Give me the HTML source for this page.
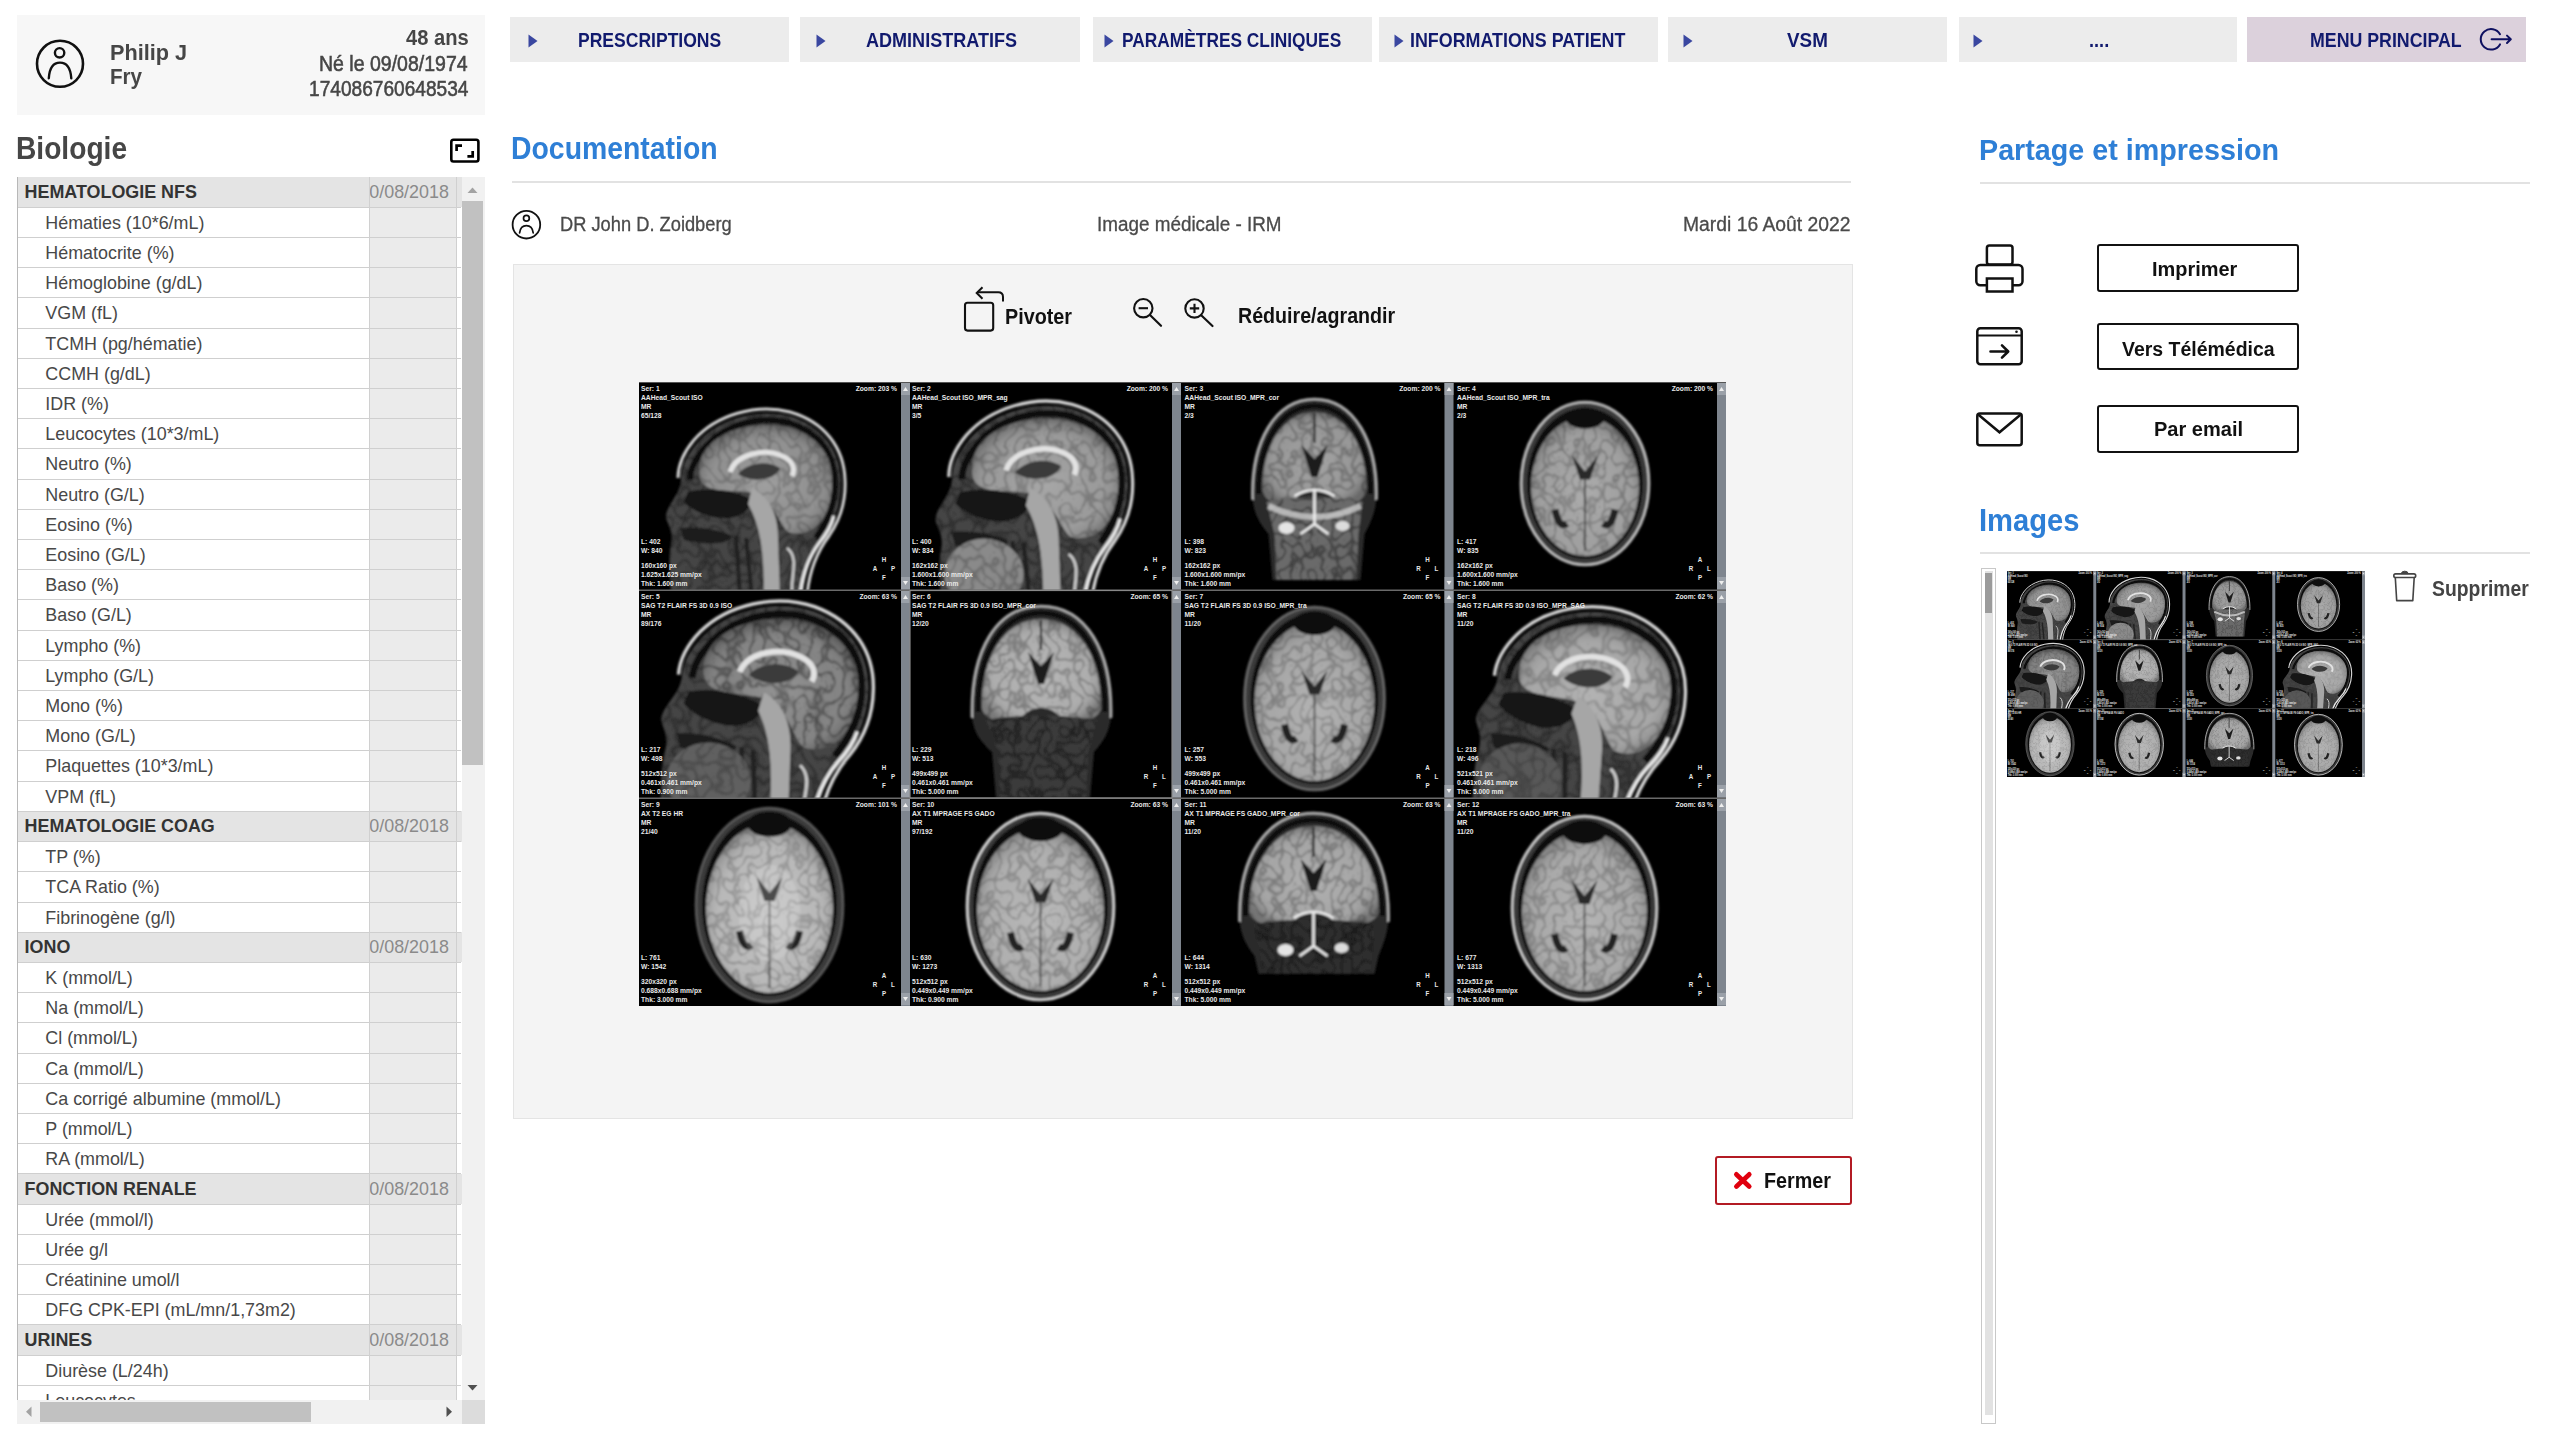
<!DOCTYPE html>
<html><head><meta charset="utf-8"><title>Documentation</title>
<style>
html,body{margin:0;padding:0;background:#fff;width:2560px;height:1439px;overflow:hidden}
body{position:relative;font-family:"Liberation Sans",sans-serif}
.b{position:absolute;box-sizing:content-box}
.t{position:absolute;white-space:nowrap;transform-origin:0 0;font-family:"Liberation Sans",sans-serif}
</style></head><body>
<svg width="0" height="0" style="position:absolute"><defs><filter id="tex11" x="0" y="0" width="100%" height="100%" filterUnits="objectBoundingBox"><feTurbulence type="turbulence" baseFrequency="0.1 0.085" numOctaves="1" seed="11" result="n"/><feColorMatrix in="n" type="matrix" values="0 0 0 0 0  0 0 0 0 0  0 0 0 0 0  -6 0 0 0 1.0" result="a"/><feComposite in="a" in2="SourceAlpha" operator="in"/></filter><filter id="tex12" x="0" y="0" width="100%" height="100%" filterUnits="objectBoundingBox"><feTurbulence type="turbulence" baseFrequency="0.1 0.085" numOctaves="1" seed="12" result="n"/><feColorMatrix in="n" type="matrix" values="0 0 0 0 0  0 0 0 0 0  0 0 0 0 0  -6 0 0 0 1.0" result="a"/><feComposite in="a" in2="SourceAlpha" operator="in"/></filter><filter id="tex21" x="0" y="0" width="100%" height="100%" filterUnits="objectBoundingBox"><feTurbulence type="turbulence" baseFrequency="0.1 0.085" numOctaves="1" seed="21" result="n"/><feColorMatrix in="n" type="matrix" values="0 0 0 0 0  0 0 0 0 0  0 0 0 0 0  -6 0 0 0 1.0" result="a"/><feComposite in="a" in2="SourceAlpha" operator="in"/></filter><filter id="tex22" x="0" y="0" width="100%" height="100%" filterUnits="objectBoundingBox"><feTurbulence type="turbulence" baseFrequency="0.1 0.085" numOctaves="1" seed="22" result="n"/><feColorMatrix in="n" type="matrix" values="0 0 0 0 0  0 0 0 0 0  0 0 0 0 0  -6 0 0 0 1.0" result="a"/><feComposite in="a" in2="SourceAlpha" operator="in"/></filter><filter id="tex23" x="0" y="0" width="100%" height="100%" filterUnits="objectBoundingBox"><feTurbulence type="turbulence" baseFrequency="0.1 0.085" numOctaves="1" seed="23" result="n"/><feColorMatrix in="n" type="matrix" values="0 0 0 0 0  0 0 0 0 0  0 0 0 0 0  -6 0 0 0 1.0" result="a"/><feComposite in="a" in2="SourceAlpha" operator="in"/></filter><filter id="tex31" x="0" y="0" width="100%" height="100%" filterUnits="objectBoundingBox"><feTurbulence type="turbulence" baseFrequency="0.1 0.085" numOctaves="1" seed="31" result="n"/><feColorMatrix in="n" type="matrix" values="0 0 0 0 0  0 0 0 0 0  0 0 0 0 0  -6 0 0 0 1.0" result="a"/><feComposite in="a" in2="SourceAlpha" operator="in"/></filter><filter id="tex34" x="0" y="0" width="100%" height="100%" filterUnits="objectBoundingBox"><feTurbulence type="turbulence" baseFrequency="0.1 0.085" numOctaves="1" seed="34" result="n"/><feColorMatrix in="n" type="matrix" values="0 0 0 0 0  0 0 0 0 0  0 0 0 0 0  -6 0 0 0 1.0" result="a"/><feComposite in="a" in2="SourceAlpha" operator="in"/></filter><filter id="tex41" x="0" y="0" width="100%" height="100%" filterUnits="objectBoundingBox"><feTurbulence type="turbulence" baseFrequency="0.1 0.085" numOctaves="1" seed="41" result="n"/><feColorMatrix in="n" type="matrix" values="0 0 0 0 0  0 0 0 0 0  0 0 0 0 0  -6 0 0 0 1.0" result="a"/><feComposite in="a" in2="SourceAlpha" operator="in"/></filter><filter id="tex51" x="0" y="0" width="100%" height="100%" filterUnits="objectBoundingBox"><feTurbulence type="turbulence" baseFrequency="0.1 0.085" numOctaves="1" seed="51" result="n"/><feColorMatrix in="n" type="matrix" values="0 0 0 0 0  0 0 0 0 0  0 0 0 0 0  -6 0 0 0 1.0" result="a"/><feComposite in="a" in2="SourceAlpha" operator="in"/></filter><filter id="tex52" x="0" y="0" width="100%" height="100%" filterUnits="objectBoundingBox"><feTurbulence type="turbulence" baseFrequency="0.1 0.085" numOctaves="1" seed="52" result="n"/><feColorMatrix in="n" type="matrix" values="0 0 0 0 0  0 0 0 0 0  0 0 0 0 0  -6 0 0 0 1.0" result="a"/><feComposite in="a" in2="SourceAlpha" operator="in"/></filter><filter id="tex53" x="0" y="0" width="100%" height="100%" filterUnits="objectBoundingBox"><feTurbulence type="turbulence" baseFrequency="0.1 0.085" numOctaves="1" seed="53" result="n"/><feColorMatrix in="n" type="matrix" values="0 0 0 0 0  0 0 0 0 0  0 0 0 0 0  -6 0 0 0 1.0" result="a"/><feComposite in="a" in2="SourceAlpha" operator="in"/></filter><filter id="tex61" x="0" y="0" width="100%" height="100%" filterUnits="objectBoundingBox"><feTurbulence type="turbulence" baseFrequency="0.1 0.085" numOctaves="1" seed="61" result="n"/><feColorMatrix in="n" type="matrix" values="0 0 0 0 0  0 0 0 0 0  0 0 0 0 0  -6 0 0 0 1.0" result="a"/><feComposite in="a" in2="SourceAlpha" operator="in"/></filter><filter id="tex64" x="0" y="0" width="100%" height="100%" filterUnits="objectBoundingBox"><feTurbulence type="turbulence" baseFrequency="0.1 0.085" numOctaves="1" seed="64" result="n"/><feColorMatrix in="n" type="matrix" values="0 0 0 0 0  0 0 0 0 0  0 0 0 0 0  -6 0 0 0 1.0" result="a"/><feComposite in="a" in2="SourceAlpha" operator="in"/></filter><filter id="tex71" x="0" y="0" width="100%" height="100%" filterUnits="objectBoundingBox"><feTurbulence type="turbulence" baseFrequency="0.1 0.085" numOctaves="1" seed="71" result="n"/><feColorMatrix in="n" type="matrix" values="0 0 0 0 0  0 0 0 0 0  0 0 0 0 0  -6 0 0 0 1.0" result="a"/><feComposite in="a" in2="SourceAlpha" operator="in"/></filter><filter id="tex81" x="0" y="0" width="100%" height="100%" filterUnits="objectBoundingBox"><feTurbulence type="turbulence" baseFrequency="0.1 0.085" numOctaves="1" seed="81" result="n"/><feColorMatrix in="n" type="matrix" values="0 0 0 0 0  0 0 0 0 0  0 0 0 0 0  -6 0 0 0 1.0" result="a"/><feComposite in="a" in2="SourceAlpha" operator="in"/></filter><filter id="tex82" x="0" y="0" width="100%" height="100%" filterUnits="objectBoundingBox"><feTurbulence type="turbulence" baseFrequency="0.1 0.085" numOctaves="1" seed="82" result="n"/><feColorMatrix in="n" type="matrix" values="0 0 0 0 0  0 0 0 0 0  0 0 0 0 0  -6 0 0 0 1.0" result="a"/><feComposite in="a" in2="SourceAlpha" operator="in"/></filter><filter id="tex83" x="0" y="0" width="100%" height="100%" filterUnits="objectBoundingBox"><feTurbulence type="turbulence" baseFrequency="0.1 0.085" numOctaves="1" seed="83" result="n"/><feColorMatrix in="n" type="matrix" values="0 0 0 0 0  0 0 0 0 0  0 0 0 0 0  -6 0 0 0 1.0" result="a"/><feComposite in="a" in2="SourceAlpha" operator="in"/></filter><filter id="tex91" x="0" y="0" width="100%" height="100%" filterUnits="objectBoundingBox"><feTurbulence type="turbulence" baseFrequency="0.1 0.085" numOctaves="1" seed="91" result="n"/><feColorMatrix in="n" type="matrix" values="0 0 0 0 0  0 0 0 0 0  0 0 0 0 0  -6 0 0 0 1.0" result="a"/><feComposite in="a" in2="SourceAlpha" operator="in"/></filter><filter id="tex101" x="0" y="0" width="100%" height="100%" filterUnits="objectBoundingBox"><feTurbulence type="turbulence" baseFrequency="0.1 0.085" numOctaves="1" seed="101" result="n"/><feColorMatrix in="n" type="matrix" values="0 0 0 0 0  0 0 0 0 0  0 0 0 0 0  -6 0 0 0 1.0" result="a"/><feComposite in="a" in2="SourceAlpha" operator="in"/></filter><filter id="tex111" x="0" y="0" width="100%" height="100%" filterUnits="objectBoundingBox"><feTurbulence type="turbulence" baseFrequency="0.1 0.085" numOctaves="1" seed="111" result="n"/><feColorMatrix in="n" type="matrix" values="0 0 0 0 0  0 0 0 0 0  0 0 0 0 0  -6 0 0 0 1.0" result="a"/><feComposite in="a" in2="SourceAlpha" operator="in"/></filter><filter id="tex114" x="0" y="0" width="100%" height="100%" filterUnits="objectBoundingBox"><feTurbulence type="turbulence" baseFrequency="0.1 0.085" numOctaves="1" seed="114" result="n"/><feColorMatrix in="n" type="matrix" values="0 0 0 0 0  0 0 0 0 0  0 0 0 0 0  -6 0 0 0 1.0" result="a"/><feComposite in="a" in2="SourceAlpha" operator="in"/></filter><filter id="tex121" x="0" y="0" width="100%" height="100%" filterUnits="objectBoundingBox"><feTurbulence type="turbulence" baseFrequency="0.1 0.085" numOctaves="1" seed="121" result="n"/><feColorMatrix in="n" type="matrix" values="0 0 0 0 0  0 0 0 0 0  0 0 0 0 0  -6 0 0 0 1.0" result="a"/><feComposite in="a" in2="SourceAlpha" operator="in"/></filter><radialGradient id="glow" cx="0.5" cy="0.55" r="0.55"><stop offset="0" stop-color="#fff" stop-opacity="0.16"/><stop offset="0.65" stop-color="#fff" stop-opacity="0.04"/><stop offset="1" stop-color="#000" stop-opacity="0.28"/></radialGradient><filter id="soft" x="-5%" y="-5%" width="110%" height="110%"><feGaussianBlur stdDeviation="0.9"/></filter><filter id="softt" x="-5%" y="-5%" width="110%" height="110%"><feGaussianBlur stdDeviation="1.6"/></filter><symbol id="mri" viewBox="0 0 1087 624"><rect width="1087" height="624" fill="#000"/><g transform="translate(0,0)"><clipPath id="c00"><rect width="262" height="208"/></clipPath><g clip-path="url(#c00)"><g filter="url(#soft)"><g transform="translate(1,6)"><path d="M163 208 C165 185 172 165 185 148 C196 132 202 112 201 92 C200 62 182 38 150 28 C118 20 80 30 58 54 C46 68 41 80 41 90 C41 98 38 104 33 112 C28 120 24 127 27 133 C30 140 33 146 31 156 C28 170 30 190 31 208 Z" fill="#444444"/><path d="M163 208 C165 185 172 165 185 148 C196 132 202 112 201 92 C200 62 182 38 150 28 C118 20 80 30 58 54 C46 68 41 80 41 90 C41 98 38 104 33 112 C28 120 24 127 27 133 C30 140 33 146 31 156 C28 170 30 190 31 208 Z" fill="#000" filter="url(#tex11)" opacity="0.324"/><path d="M167 208 C169 185 176 165 189 148 C200 132 206 112 205 92 C204 60 185 34 150 24 C116 15 76 27 54 52 C43 65 38 78 38 90" fill="none" stroke="#d4d4d4" stroke-width="3"/><path d="M160 208 C162 188 168 170 180 154 C188 144 192 136 194 128" fill="none" stroke="#e6e6e6" stroke-width="3.5"/><path d="M176 150 C189 132 196 112 195 92 C194 64 178 44 150 35 C120 27 86 36 66 58 C56 70 50 80 50 92" fill="none" stroke="#0c0c0c" stroke-width="6"/><path d="M59 84 C58 60 80 42 112 38 C146 34 176 44 188 70 C196 90 192 118 182 132 C174 144 160 148 148 144 C140 136 136 122 124 110 C112 102 96 104 78 102 C64 100 59 94 59 84 Z" fill="#8c8c8c"/><path d="M59 84 C58 60 80 42 112 38 C146 34 176 44 188 70 C196 90 192 118 182 132 C174 144 160 148 148 144 C140 136 136 122 124 110 C112 102 96 104 78 102 C64 100 59 94 59 84 Z" fill="#000" filter="url(#tex12)" opacity="0.230"/><path d="M59 84 C58 60 80 42 112 38 C146 34 176 44 188 70 C196 90 192 118 182 132 C174 144 160 148 148 144 C140 136 136 122 124 110 C112 102 96 104 78 102 C64 100 59 94 59 84 Z" fill="url(#glow)"/><path d="M90 84 C96 66 124 60 142 68 C152 72 156 80 152 88" fill="none" stroke="#e2e2e2" stroke-width="5"/><path d="M98 86 C108 74 128 72 140 80 C136 92 112 96 98 86Z" fill="#3a3a3a"/><path d="M48 104 C70 98 100 104 112 112 C110 124 96 132 80 130 C64 128 52 122 44 114Z" fill="#121212"/><path d="M40 140 C60 138 80 142 92 148 C88 156 70 158 44 152Z" fill="#1a1a1a"/><path d="M112 100 C128 108 138 124 138 150 L140 208 L124 208 C124 170 122 140 108 116Z" fill="#a6a6a6"/><path d="M106 150 L112 208 M96 148 L100 208" stroke="#222" stroke-width="4"/><path d="M147 160 C160 170 150 190 152 208" stroke="#cfcfcf" stroke-width="2.5" fill="none"/></g></g><text x="2.3255813953488373" y="9.5" font-size="7.8" fill="#e8e8e8" text-anchor="start" font-family="Liberation Sans" font-weight="bold" transform="scale(0.86,1)" >Ser: 1</text><text x="2.3255813953488373" y="18.3" font-size="7.8" fill="#e8e8e8" text-anchor="start" font-family="Liberation Sans" font-weight="bold" transform="scale(0.86,1)" >AAHead_Scout ISO</text><text x="2.3255813953488373" y="27.1" font-size="7.8" fill="#e8e8e8" text-anchor="start" font-family="Liberation Sans" font-weight="bold" transform="scale(0.86,1)" >MR</text><text x="2.3255813953488373" y="35.900000000000006" font-size="7.8" fill="#e8e8e8" text-anchor="start" font-family="Liberation Sans" font-weight="bold" transform="scale(0.86,1)" >65/128</text><text x="300.0" y="9.5" font-size="7.8" fill="#e8e8e8" text-anchor="end" font-family="Liberation Sans" font-weight="bold" transform="scale(0.86,1)" >Zoom: 203 %</text><text x="2.3255813953488373" y="162" font-size="7.8" fill="#e8e8e8" text-anchor="start" font-family="Liberation Sans" font-weight="bold" transform="scale(0.86,1)" >L: 402</text><text x="2.3255813953488373" y="171" font-size="7.8" fill="#e8e8e8" text-anchor="start" font-family="Liberation Sans" font-weight="bold" transform="scale(0.86,1)" >W: 840</text><text x="2.3255813953488373" y="186.5" font-size="7.8" fill="#e8e8e8" text-anchor="start" font-family="Liberation Sans" font-weight="bold" transform="scale(0.86,1)" >160x160 px</text><text x="2.3255813953488373" y="195.4" font-size="7.8" fill="#e8e8e8" text-anchor="start" font-family="Liberation Sans" font-weight="bold" transform="scale(0.86,1)" >1.625x1.625 mm/px</text><text x="2.3255813953488373" y="204.3" font-size="7.8" fill="#e8e8e8" text-anchor="start" font-family="Liberation Sans" font-weight="bold" transform="scale(0.86,1)" >Thk: 1.600 mm</text><text x="284.8837209302326" y="180" font-size="7.2" fill="#e8e8e8" text-anchor="middle" font-family="Liberation Sans" font-weight="bold" transform="scale(0.86,1)" >H</text><text x="274.4186046511628" y="189" font-size="7.2" fill="#e8e8e8" text-anchor="middle" font-family="Liberation Sans" font-weight="bold" transform="scale(0.86,1)" >A</text><text x="295.34883720930236" y="189" font-size="7.2" fill="#e8e8e8" text-anchor="middle" font-family="Liberation Sans" font-weight="bold" transform="scale(0.86,1)" >P</text><text x="284.8837209302326" y="198" font-size="7.2" fill="#e8e8e8" text-anchor="middle" font-family="Liberation Sans" font-weight="bold" transform="scale(0.86,1)" >F</text></g><rect x="262" y="0" width="9" height="208" fill="#7e858e"/><rect x="262" y="1" width="9" height="12" fill="#9aa0a8"/><rect x="262" y="195" width="9" height="12" fill="#9aa0a8"/><path d="M264 9 L266.5 5 L269 9Z" fill="#eee"/><path d="M264 199 L266.5 203 L269 199Z" fill="#eee"/></g><g transform="translate(271,0)"><clipPath id="c10"><rect width="262" height="208"/></clipPath><g clip-path="url(#c10)"><g filter="url(#soft)"><g transform="translate(-3,-4) scale(1.1)"><path d="M163 208 C165 185 172 165 185 148 C196 132 202 112 201 92 C200 62 182 38 150 28 C118 20 80 30 58 54 C46 68 41 80 41 90 C41 98 38 104 33 112 C28 120 24 127 27 133 C30 140 33 146 31 156 C28 170 30 190 31 208 Z" fill="#444444"/><path d="M163 208 C165 185 172 165 185 148 C196 132 202 112 201 92 C200 62 182 38 150 28 C118 20 80 30 58 54 C46 68 41 80 41 90 C41 98 38 104 33 112 C28 120 24 127 27 133 C30 140 33 146 31 156 C28 170 30 190 31 208 Z" fill="#000" filter="url(#tex21)" opacity="0.324"/><path d="M167 208 C169 185 176 165 189 148 C200 132 206 112 205 92 C204 60 185 34 150 24 C116 15 76 27 54 52 C43 65 38 78 38 90" fill="none" stroke="#d4d4d4" stroke-width="3"/><path d="M160 208 C162 188 168 170 180 154 C188 144 192 136 194 128" fill="none" stroke="#e6e6e6" stroke-width="3.5"/><path d="M176 150 C189 132 196 112 195 92 C194 64 178 44 150 35 C120 27 86 36 66 58 C56 70 50 80 50 92" fill="none" stroke="#0c0c0c" stroke-width="6"/><path d="M59 84 C58 60 80 42 112 38 C146 34 176 44 188 70 C196 90 192 118 182 132 C174 144 160 148 148 144 C140 136 136 122 124 110 C112 102 96 104 78 102 C64 100 59 94 59 84 Z" fill="#969696"/><path d="M59 84 C58 60 80 42 112 38 C146 34 176 44 188 70 C196 90 192 118 182 132 C174 144 160 148 148 144 C140 136 136 122 124 110 C112 102 96 104 78 102 C64 100 59 94 59 84 Z" fill="#000" filter="url(#tex22)" opacity="0.230"/><path d="M59 84 C58 60 80 42 112 38 C146 34 176 44 188 70 C196 90 192 118 182 132 C174 144 160 148 148 144 C140 136 136 122 124 110 C112 102 96 104 78 102 C64 100 59 94 59 84 Z" fill="url(#glow)"/><path d="M90 84 C96 66 124 60 142 68 C152 72 156 80 152 88" fill="none" stroke="#e2e2e2" stroke-width="5"/><path d="M98 86 C108 74 128 72 140 80 C136 92 112 96 98 86Z" fill="#3a3a3a"/><path d="M48 104 C70 98 100 104 112 112 C110 124 96 132 80 130 C64 128 52 122 44 114Z" fill="#121212"/><path d="M40 140 C60 138 80 142 92 148 C88 156 70 158 44 152Z" fill="#1a1a1a"/><path d="M112 100 C128 108 138 124 138 150 L140 208 L124 208 C124 170 122 140 108 116Z" fill="#a6a6a6"/><path d="M106 150 L112 208 M96 148 L100 208" stroke="#222" stroke-width="4"/><path d="M147 160 C160 170 150 190 152 208" stroke="#cfcfcf" stroke-width="2.5" fill="none"/><ellipse cx="70" cy="178" rx="36" ry="32" fill="#8a8a8a"/><path d="M34 178 a36 32 0 1 0 72 0 a36 32 0 1 0 -72 0" fill="#000" filter="url(#tex23)" opacity="0.216"/></g></g><text x="2.3255813953488373" y="9.5" font-size="7.8" fill="#e8e8e8" text-anchor="start" font-family="Liberation Sans" font-weight="bold" transform="scale(0.86,1)" >Ser: 2</text><text x="2.3255813953488373" y="18.3" font-size="7.8" fill="#e8e8e8" text-anchor="start" font-family="Liberation Sans" font-weight="bold" transform="scale(0.86,1)" >AAHead_Scout ISO_MPR_sag</text><text x="2.3255813953488373" y="27.1" font-size="7.8" fill="#e8e8e8" text-anchor="start" font-family="Liberation Sans" font-weight="bold" transform="scale(0.86,1)" >MR</text><text x="2.3255813953488373" y="35.900000000000006" font-size="7.8" fill="#e8e8e8" text-anchor="start" font-family="Liberation Sans" font-weight="bold" transform="scale(0.86,1)" >3/5</text><text x="300.0" y="9.5" font-size="7.8" fill="#e8e8e8" text-anchor="end" font-family="Liberation Sans" font-weight="bold" transform="scale(0.86,1)" >Zoom: 200 %</text><text x="2.3255813953488373" y="162" font-size="7.8" fill="#e8e8e8" text-anchor="start" font-family="Liberation Sans" font-weight="bold" transform="scale(0.86,1)" >L: 400</text><text x="2.3255813953488373" y="171" font-size="7.8" fill="#e8e8e8" text-anchor="start" font-family="Liberation Sans" font-weight="bold" transform="scale(0.86,1)" >W: 834</text><text x="2.3255813953488373" y="186.5" font-size="7.8" fill="#e8e8e8" text-anchor="start" font-family="Liberation Sans" font-weight="bold" transform="scale(0.86,1)" >162x162 px</text><text x="2.3255813953488373" y="195.4" font-size="7.8" fill="#e8e8e8" text-anchor="start" font-family="Liberation Sans" font-weight="bold" transform="scale(0.86,1)" >1.600x1.600 mm/px</text><text x="2.3255813953488373" y="204.3" font-size="7.8" fill="#e8e8e8" text-anchor="start" font-family="Liberation Sans" font-weight="bold" transform="scale(0.86,1)" >Thk: 1.600 mm</text><text x="284.8837209302326" y="180" font-size="7.2" fill="#e8e8e8" text-anchor="middle" font-family="Liberation Sans" font-weight="bold" transform="scale(0.86,1)" >H</text><text x="274.4186046511628" y="189" font-size="7.2" fill="#e8e8e8" text-anchor="middle" font-family="Liberation Sans" font-weight="bold" transform="scale(0.86,1)" >A</text><text x="295.34883720930236" y="189" font-size="7.2" fill="#e8e8e8" text-anchor="middle" font-family="Liberation Sans" font-weight="bold" transform="scale(0.86,1)" >P</text><text x="284.8837209302326" y="198" font-size="7.2" fill="#e8e8e8" text-anchor="middle" font-family="Liberation Sans" font-weight="bold" transform="scale(0.86,1)" >F</text></g><rect x="262" y="0" width="9" height="208" fill="#7e858e"/><rect x="262" y="1" width="9" height="12" fill="#9aa0a8"/><rect x="262" y="195" width="9" height="12" fill="#9aa0a8"/><path d="M264 9 L266.5 5 L269 9Z" fill="#eee"/><path d="M264 199 L266.5 203 L269 199Z" fill="#eee"/></g><g transform="translate(543.5,0)"><clipPath id="c20"><rect width="262" height="208"/></clipPath><g clip-path="url(#c20)"><g filter="url(#soft)"><path d="M70 112 C68 60 92.32 17 132 17 C171.68 17 196 60 194 112 C194 126 190 138 182 152 L178 198 L90 198 L86 152 C74 138 70 126 70 112Z" fill="#2c2c2c"/><path d="M70 118 C68 60 92.32 17 132 17 C171.68 17 196 60 194 118" fill="none" stroke="#b4b4b4" stroke-width="2.6"/><path d="M76 112 C75 64 97.28 24 132 24 C166.72 24 189 64 188 112" fill="none" stroke="#0c0c0c" stroke-width="5"/><path d="M80 108 C79 66 99.75999999999999 30 132 30 C164.24 30 185 66 184 108 C182 122 162 126 148 114 C140 106 124 106 116 114 C102 126 82 122 80 108Z" fill="#939393"/><path d="M80 108 C79 66 99.75999999999999 30 132 30 C164.24 30 185 66 184 108 C182 122 162 126 148 114 C140 106 124 106 116 114 C102 126 82 122 80 108Z" fill="#000" filter="url(#tex31)" opacity="0.288"/><path d="M80 108 C79 66 99.75999999999999 30 132 30 C164.24 30 185 66 184 108 C182 122 162 126 148 114 C140 106 124 106 116 114 C102 126 82 122 80 108Z" fill="url(#glow)"/><path d="M119 63 L132 77 L145 63 L135 95 L129 95Z" fill="#1e1e1e"/><path d="M132 31 L132 61" stroke="#222" stroke-width="2"/><path d="M84 120 C112 114 152 114 180 120 L176 152 L174 198 L94 198 L92 152Z" fill="#6a6a6a"/><path d="M84 120 C112 114 152 114 180 120 L176 152 L174 198 L94 198 L92 152Z" fill="#000" filter="url(#tex34)" opacity="0.396"/><path d="M86 124 Q132 146 178 124" fill="none" stroke="#cfcfcf" stroke-width="6" opacity="0.8"/><path d="M112 114 Q132 102 152 114 M132 108 L132 142 M132 142 L118 152 M132 142 L146 152" stroke="#eee" stroke-width="2.6" fill="none"/><ellipse cx="104" cy="146" rx="8" ry="6" fill="#e4e4e4"/><ellipse cx="160" cy="144" rx="7" ry="5" fill="#dcdcdc"/></g><text x="2.3255813953488373" y="9.5" font-size="7.8" fill="#e8e8e8" text-anchor="start" font-family="Liberation Sans" font-weight="bold" transform="scale(0.86,1)" >Ser: 3</text><text x="2.3255813953488373" y="18.3" font-size="7.8" fill="#e8e8e8" text-anchor="start" font-family="Liberation Sans" font-weight="bold" transform="scale(0.86,1)" >AAHead_Scout ISO_MPR_cor</text><text x="2.3255813953488373" y="27.1" font-size="7.8" fill="#e8e8e8" text-anchor="start" font-family="Liberation Sans" font-weight="bold" transform="scale(0.86,1)" >MR</text><text x="2.3255813953488373" y="35.900000000000006" font-size="7.8" fill="#e8e8e8" text-anchor="start" font-family="Liberation Sans" font-weight="bold" transform="scale(0.86,1)" >2/3</text><text x="300.0" y="9.5" font-size="7.8" fill="#e8e8e8" text-anchor="end" font-family="Liberation Sans" font-weight="bold" transform="scale(0.86,1)" >Zoom: 200 %</text><text x="2.3255813953488373" y="162" font-size="7.8" fill="#e8e8e8" text-anchor="start" font-family="Liberation Sans" font-weight="bold" transform="scale(0.86,1)" >L: 398</text><text x="2.3255813953488373" y="171" font-size="7.8" fill="#e8e8e8" text-anchor="start" font-family="Liberation Sans" font-weight="bold" transform="scale(0.86,1)" >W: 823</text><text x="2.3255813953488373" y="186.5" font-size="7.8" fill="#e8e8e8" text-anchor="start" font-family="Liberation Sans" font-weight="bold" transform="scale(0.86,1)" >162x162 px</text><text x="2.3255813953488373" y="195.4" font-size="7.8" fill="#e8e8e8" text-anchor="start" font-family="Liberation Sans" font-weight="bold" transform="scale(0.86,1)" >1.600x1.600 mm/px</text><text x="2.3255813953488373" y="204.3" font-size="7.8" fill="#e8e8e8" text-anchor="start" font-family="Liberation Sans" font-weight="bold" transform="scale(0.86,1)" >Thk: 1.600 mm</text><text x="284.8837209302326" y="180" font-size="7.2" fill="#e8e8e8" text-anchor="middle" font-family="Liberation Sans" font-weight="bold" transform="scale(0.86,1)" >H</text><text x="274.4186046511628" y="189" font-size="7.2" fill="#e8e8e8" text-anchor="middle" font-family="Liberation Sans" font-weight="bold" transform="scale(0.86,1)" >R</text><text x="295.34883720930236" y="189" font-size="7.2" fill="#e8e8e8" text-anchor="middle" font-family="Liberation Sans" font-weight="bold" transform="scale(0.86,1)" >L</text><text x="284.8837209302326" y="198" font-size="7.2" fill="#e8e8e8" text-anchor="middle" font-family="Liberation Sans" font-weight="bold" transform="scale(0.86,1)" >F</text></g><rect x="262" y="0" width="9" height="208" fill="#7e858e"/><rect x="262" y="1" width="9" height="12" fill="#9aa0a8"/><rect x="262" y="195" width="9" height="12" fill="#9aa0a8"/><path d="M264 9 L266.5 5 L269 9Z" fill="#eee"/><path d="M264 199 L266.5 203 L269 199Z" fill="#eee"/></g><g transform="translate(816,0)"><clipPath id="c30"><rect width="262" height="208"/></clipPath><g clip-path="url(#c30)"><g filter="url(#soft)"><ellipse cx="130" cy="101.5" rx="64" ry="81.5" fill="#3a3a3a" stroke="#c0c0c0" stroke-width="2.6"/><ellipse cx="130" cy="101.5" rx="58" ry="75.5" fill="#111"/><path d="M76 104.5 a54 69.5 0 1 0 108 0 a54 69.5 0 1 0 -108 0" fill="#9c9c9c"/><path d="M76 104.5 a54 69.5 0 1 0 108 0 a54 69.5 0 1 0 -108 0" fill="#000" filter="url(#tex41)" opacity="0.252"/><path d="M76 104.5 a54 69.5 0 1 0 108 0 a54 69.5 0 1 0 -108 0" fill="url(#glow)"/><ellipse cx="130" cy="36.0" rx="19.2" ry="10.595" fill="#0e0e0e"/><path d="M117 73.5 L130 89.5 L143 73.5 L135 97.5 L125 97.5Z" fill="#2a2a2a"/><path d="M100 127.5 Q104 147.5 112 141.5 M160 127.5 Q156 147.5 148 141.5" stroke="#242424" stroke-width="7" fill="none"/><path d="M130 97.5 L130 169.0" stroke="#000" stroke-opacity="0.45" stroke-width="2"/></g><text x="2.3255813953488373" y="9.5" font-size="7.8" fill="#e8e8e8" text-anchor="start" font-family="Liberation Sans" font-weight="bold" transform="scale(0.86,1)" >Ser: 4</text><text x="2.3255813953488373" y="18.3" font-size="7.8" fill="#e8e8e8" text-anchor="start" font-family="Liberation Sans" font-weight="bold" transform="scale(0.86,1)" >AAHead_Scout ISO_MPR_tra</text><text x="2.3255813953488373" y="27.1" font-size="7.8" fill="#e8e8e8" text-anchor="start" font-family="Liberation Sans" font-weight="bold" transform="scale(0.86,1)" >MR</text><text x="2.3255813953488373" y="35.900000000000006" font-size="7.8" fill="#e8e8e8" text-anchor="start" font-family="Liberation Sans" font-weight="bold" transform="scale(0.86,1)" >2/3</text><text x="300.0" y="9.5" font-size="7.8" fill="#e8e8e8" text-anchor="end" font-family="Liberation Sans" font-weight="bold" transform="scale(0.86,1)" >Zoom: 200 %</text><text x="2.3255813953488373" y="162" font-size="7.8" fill="#e8e8e8" text-anchor="start" font-family="Liberation Sans" font-weight="bold" transform="scale(0.86,1)" >L: 417</text><text x="2.3255813953488373" y="171" font-size="7.8" fill="#e8e8e8" text-anchor="start" font-family="Liberation Sans" font-weight="bold" transform="scale(0.86,1)" >W: 835</text><text x="2.3255813953488373" y="186.5" font-size="7.8" fill="#e8e8e8" text-anchor="start" font-family="Liberation Sans" font-weight="bold" transform="scale(0.86,1)" >162x162 px</text><text x="2.3255813953488373" y="195.4" font-size="7.8" fill="#e8e8e8" text-anchor="start" font-family="Liberation Sans" font-weight="bold" transform="scale(0.86,1)" >1.600x1.600 mm/px</text><text x="2.3255813953488373" y="204.3" font-size="7.8" fill="#e8e8e8" text-anchor="start" font-family="Liberation Sans" font-weight="bold" transform="scale(0.86,1)" >Thk: 1.600 mm</text><text x="284.8837209302326" y="180" font-size="7.2" fill="#e8e8e8" text-anchor="middle" font-family="Liberation Sans" font-weight="bold" transform="scale(0.86,1)" >A</text><text x="274.4186046511628" y="189" font-size="7.2" fill="#e8e8e8" text-anchor="middle" font-family="Liberation Sans" font-weight="bold" transform="scale(0.86,1)" >R</text><text x="295.34883720930236" y="189" font-size="7.2" fill="#e8e8e8" text-anchor="middle" font-family="Liberation Sans" font-weight="bold" transform="scale(0.86,1)" >L</text><text x="284.8837209302326" y="198" font-size="7.2" fill="#e8e8e8" text-anchor="middle" font-family="Liberation Sans" font-weight="bold" transform="scale(0.86,1)" >P</text></g><rect x="262" y="0" width="9" height="208" fill="#7e858e"/><rect x="262" y="1" width="9" height="12" fill="#9aa0a8"/><rect x="262" y="195" width="9" height="12" fill="#9aa0a8"/><path d="M264 9 L266.5 5 L269 9Z" fill="#eee"/><path d="M264 199 L266.5 203 L269 199Z" fill="#eee"/></g><g transform="translate(0,208)"><clipPath id="c01"><rect width="262" height="208"/></clipPath><g clip-path="url(#c01)"><g filter="url(#soft)"><g transform="translate(-6,-14) scale(1.17) rotate(4 120 100)"><path d="M163 208 C165 185 172 165 185 148 C196 132 202 112 201 92 C200 62 182 38 150 28 C118 20 80 30 58 54 C46 68 41 80 41 90 C41 98 38 104 33 112 C28 120 24 127 27 133 C30 140 33 146 31 156 C28 170 30 190 31 208 Z" fill="#444444"/><path d="M163 208 C165 185 172 165 185 148 C196 132 202 112 201 92 C200 62 182 38 150 28 C118 20 80 30 58 54 C46 68 41 80 41 90 C41 98 38 104 33 112 C28 120 24 127 27 133 C30 140 33 146 31 156 C28 170 30 190 31 208 Z" fill="#000" filter="url(#tex51)" opacity="0.324"/><path d="M167 208 C169 185 176 165 189 148 C200 132 206 112 205 92 C204 60 185 34 150 24 C116 15 76 27 54 52 C43 65 38 78 38 90" fill="none" stroke="#d4d4d4" stroke-width="3"/><path d="M160 208 C162 188 168 170 180 154 C188 144 192 136 194 128" fill="none" stroke="#e6e6e6" stroke-width="3.5"/><path d="M176 150 C189 132 196 112 195 92 C194 64 178 44 150 35 C120 27 86 36 66 58 C56 70 50 80 50 92" fill="none" stroke="#0c0c0c" stroke-width="6"/><path d="M59 84 C58 60 80 42 112 38 C146 34 176 44 188 70 C196 90 192 118 182 132 C174 144 160 148 148 144 C140 136 136 122 124 110 C112 102 96 104 78 102 C64 100 59 94 59 84 Z" fill="#7e7e7e"/><path d="M59 84 C58 60 80 42 112 38 C146 34 176 44 188 70 C196 90 192 118 182 132 C174 144 160 148 148 144 C140 136 136 122 124 110 C112 102 96 104 78 102 C64 100 59 94 59 84 Z" fill="#000" filter="url(#tex52)" opacity="0.432"/><path d="M59 84 C58 60 80 42 112 38 C146 34 176 44 188 70 C196 90 192 118 182 132 C174 144 160 148 148 144 C140 136 136 122 124 110 C112 102 96 104 78 102 C64 100 59 94 59 84 Z" fill="url(#glow)"/><path d="M90 84 C96 66 124 60 142 68 C152 72 156 80 152 88" fill="none" stroke="#e2e2e2" stroke-width="5"/><path d="M98 86 C108 74 128 72 140 80 C136 92 112 96 98 86Z" fill="#3a3a3a"/><path d="M48 104 C70 98 100 104 112 112 C110 124 96 132 80 130 C64 128 52 122 44 114Z" fill="#121212"/><path d="M40 140 C60 138 80 142 92 148 C88 156 70 158 44 152Z" fill="#1a1a1a"/><path d="M112 100 C128 108 138 124 138 150 L140 208 L124 208 C124 170 122 140 108 116Z" fill="#a6a6a6"/><path d="M106 150 L112 208 M96 148 L100 208" stroke="#222" stroke-width="4"/><path d="M147 160 C160 170 150 190 152 208" stroke="#cfcfcf" stroke-width="2.5" fill="none"/><ellipse cx="70" cy="178" rx="36" ry="32" fill="#606060"/><path d="M34 178 a36 32 0 1 0 72 0 a36 32 0 1 0 -72 0" fill="#000" filter="url(#tex53)" opacity="0.216"/></g></g><text x="2.3255813953488373" y="9.5" font-size="7.8" fill="#e8e8e8" text-anchor="start" font-family="Liberation Sans" font-weight="bold" transform="scale(0.86,1)" >Ser: 5</text><text x="2.3255813953488373" y="18.3" font-size="7.8" fill="#e8e8e8" text-anchor="start" font-family="Liberation Sans" font-weight="bold" transform="scale(0.86,1)" >SAG T2 FLAIR FS 3D 0.9 ISO</text><text x="2.3255813953488373" y="27.1" font-size="7.8" fill="#e8e8e8" text-anchor="start" font-family="Liberation Sans" font-weight="bold" transform="scale(0.86,1)" >MR</text><text x="2.3255813953488373" y="35.900000000000006" font-size="7.8" fill="#e8e8e8" text-anchor="start" font-family="Liberation Sans" font-weight="bold" transform="scale(0.86,1)" >89/176</text><text x="300.0" y="9.5" font-size="7.8" fill="#e8e8e8" text-anchor="end" font-family="Liberation Sans" font-weight="bold" transform="scale(0.86,1)" >Zoom: 63 %</text><text x="2.3255813953488373" y="162" font-size="7.8" fill="#e8e8e8" text-anchor="start" font-family="Liberation Sans" font-weight="bold" transform="scale(0.86,1)" >L: 217</text><text x="2.3255813953488373" y="171" font-size="7.8" fill="#e8e8e8" text-anchor="start" font-family="Liberation Sans" font-weight="bold" transform="scale(0.86,1)" >W: 498</text><text x="2.3255813953488373" y="186.5" font-size="7.8" fill="#e8e8e8" text-anchor="start" font-family="Liberation Sans" font-weight="bold" transform="scale(0.86,1)" >512x512 px</text><text x="2.3255813953488373" y="195.4" font-size="7.8" fill="#e8e8e8" text-anchor="start" font-family="Liberation Sans" font-weight="bold" transform="scale(0.86,1)" >0.461x0.461 mm/px</text><text x="2.3255813953488373" y="204.3" font-size="7.8" fill="#e8e8e8" text-anchor="start" font-family="Liberation Sans" font-weight="bold" transform="scale(0.86,1)" >Thk: 0.900 mm</text><text x="284.8837209302326" y="180" font-size="7.2" fill="#e8e8e8" text-anchor="middle" font-family="Liberation Sans" font-weight="bold" transform="scale(0.86,1)" >H</text><text x="274.4186046511628" y="189" font-size="7.2" fill="#e8e8e8" text-anchor="middle" font-family="Liberation Sans" font-weight="bold" transform="scale(0.86,1)" >A</text><text x="295.34883720930236" y="189" font-size="7.2" fill="#e8e8e8" text-anchor="middle" font-family="Liberation Sans" font-weight="bold" transform="scale(0.86,1)" >P</text><text x="284.8837209302326" y="198" font-size="7.2" fill="#e8e8e8" text-anchor="middle" font-family="Liberation Sans" font-weight="bold" transform="scale(0.86,1)" >F</text></g><rect x="262" y="0" width="9" height="208" fill="#7e858e"/><rect x="262" y="1" width="9" height="12" fill="#9aa0a8"/><rect x="262" y="195" width="9" height="12" fill="#9aa0a8"/><path d="M264 9 L266.5 5 L269 9Z" fill="#eee"/><path d="M264 199 L266.5 203 L269 199Z" fill="#eee"/></g><g transform="translate(271,208)"><clipPath id="c11"><rect width="262" height="208"/></clipPath><g clip-path="url(#c11)"><g filter="url(#soft)"><path d="M62 122 C60 60 86.52 16 131 16 C175.48000000000002 16 203 60 201 122 C201 136 197 148 184 162 L180 208 L86 208 L82 162 C66 148 62 136 62 122Z" fill="#2c2c2c"/><path d="M62 128 C60 60 86.52 16 131 16 C175.48000000000002 16 203 60 201 128" fill="none" stroke="#b4b4b4" stroke-width="2.6"/><path d="M68 122 C67 64 92.08 23 131 23 C169.92000000000002 23 196 64 195 122" fill="none" stroke="#0c0c0c" stroke-width="5"/><path d="M72 118 C71 66 94.86 29 131 29 C167.14 29 192 66 191 118 C189 132 161 136 147 124 C139 116 123 116 115 124 C101 136 74 132 72 118Z" fill="#aaaaaa"/><path d="M72 118 C71 66 94.86 29 131 29 C167.14 29 192 66 191 118 C189 132 161 136 147 124 C139 116 123 116 115 124 C101 136 74 132 72 118Z" fill="#000" filter="url(#tex61)" opacity="0.288"/><path d="M72 118 C71 66 94.86 29 131 29 C167.14 29 192 66 191 118 C189 132 161 136 147 124 C139 116 123 116 115 124 C101 136 74 132 72 118Z" fill="url(#glow)"/><path d="M118 62 L131 76 L144 62 L134 94 L128 94Z" fill="#1e1e1e"/><path d="M131 30 L131 60" stroke="#222" stroke-width="2"/><path d="M76 130 C111 124 151 124 187 130 L178 162 L176 208 L90 208 L88 162Z" fill="#3a3a3a"/><path d="M76 130 C111 124 151 124 187 130 L178 162 L176 208 L90 208 L88 162Z" fill="#000" filter="url(#tex64)" opacity="0.396"/></g><text x="2.3255813953488373" y="9.5" font-size="7.8" fill="#e8e8e8" text-anchor="start" font-family="Liberation Sans" font-weight="bold" transform="scale(0.86,1)" >Ser: 6</text><text x="2.3255813953488373" y="18.3" font-size="7.8" fill="#e8e8e8" text-anchor="start" font-family="Liberation Sans" font-weight="bold" transform="scale(0.86,1)" >SAG T2 FLAIR FS 3D 0.9 ISO_MPR_cor</text><text x="2.3255813953488373" y="27.1" font-size="7.8" fill="#e8e8e8" text-anchor="start" font-family="Liberation Sans" font-weight="bold" transform="scale(0.86,1)" >MR</text><text x="2.3255813953488373" y="35.900000000000006" font-size="7.8" fill="#e8e8e8" text-anchor="start" font-family="Liberation Sans" font-weight="bold" transform="scale(0.86,1)" >12/20</text><text x="300.0" y="9.5" font-size="7.8" fill="#e8e8e8" text-anchor="end" font-family="Liberation Sans" font-weight="bold" transform="scale(0.86,1)" >Zoom: 65 %</text><text x="2.3255813953488373" y="162" font-size="7.8" fill="#e8e8e8" text-anchor="start" font-family="Liberation Sans" font-weight="bold" transform="scale(0.86,1)" >L: 229</text><text x="2.3255813953488373" y="171" font-size="7.8" fill="#e8e8e8" text-anchor="start" font-family="Liberation Sans" font-weight="bold" transform="scale(0.86,1)" >W: 513</text><text x="2.3255813953488373" y="186.5" font-size="7.8" fill="#e8e8e8" text-anchor="start" font-family="Liberation Sans" font-weight="bold" transform="scale(0.86,1)" >499x499 px</text><text x="2.3255813953488373" y="195.4" font-size="7.8" fill="#e8e8e8" text-anchor="start" font-family="Liberation Sans" font-weight="bold" transform="scale(0.86,1)" >0.461x0.461 mm/px</text><text x="2.3255813953488373" y="204.3" font-size="7.8" fill="#e8e8e8" text-anchor="start" font-family="Liberation Sans" font-weight="bold" transform="scale(0.86,1)" >Thk: 5.000 mm</text><text x="284.8837209302326" y="180" font-size="7.2" fill="#e8e8e8" text-anchor="middle" font-family="Liberation Sans" font-weight="bold" transform="scale(0.86,1)" >H</text><text x="274.4186046511628" y="189" font-size="7.2" fill="#e8e8e8" text-anchor="middle" font-family="Liberation Sans" font-weight="bold" transform="scale(0.86,1)" >R</text><text x="295.34883720930236" y="189" font-size="7.2" fill="#e8e8e8" text-anchor="middle" font-family="Liberation Sans" font-weight="bold" transform="scale(0.86,1)" >L</text><text x="284.8837209302326" y="198" font-size="7.2" fill="#e8e8e8" text-anchor="middle" font-family="Liberation Sans" font-weight="bold" transform="scale(0.86,1)" >F</text></g><rect x="262" y="0" width="9" height="208" fill="#7e858e"/><rect x="262" y="1" width="9" height="12" fill="#9aa0a8"/><rect x="262" y="195" width="9" height="12" fill="#9aa0a8"/><path d="M264 9 L266.5 5 L269 9Z" fill="#eee"/><path d="M264 199 L266.5 203 L269 199Z" fill="#eee"/></g><g transform="translate(543.5,208)"><clipPath id="c21"><rect width="262" height="208"/></clipPath><g clip-path="url(#c21)"><g filter="url(#soft)"><ellipse cx="132" cy="108.5" rx="70" ry="91.5" fill="#3a3a3a" stroke="#6a6a6a" stroke-width="2.6"/><ellipse cx="132" cy="108.5" rx="64" ry="85.5" fill="#111"/><path d="M72 111.5 a60 79.5 0 1 0 120 0 a60 79.5 0 1 0 -120 0" fill="#a4a4a4"/><path d="M72 111.5 a60 79.5 0 1 0 120 0 a60 79.5 0 1 0 -120 0" fill="#000" filter="url(#tex71)" opacity="0.252"/><path d="M72 111.5 a60 79.5 0 1 0 120 0 a60 79.5 0 1 0 -120 0" fill="url(#glow)"/><ellipse cx="132" cy="33.0" rx="21.0" ry="11.895" fill="#0e0e0e"/><path d="M119 80.5 L132 96.5 L145 80.5 L137 104.5 L127 104.5Z" fill="#2a2a2a"/><path d="M102 134.5 Q106 154.5 114 148.5 M162 134.5 Q158 154.5 150 148.5" stroke="#242424" stroke-width="7" fill="none"/><path d="M132 104.5 L132 186.0" stroke="#000" stroke-opacity="0.45" stroke-width="2"/></g><text x="2.3255813953488373" y="9.5" font-size="7.8" fill="#e8e8e8" text-anchor="start" font-family="Liberation Sans" font-weight="bold" transform="scale(0.86,1)" >Ser: 7</text><text x="2.3255813953488373" y="18.3" font-size="7.8" fill="#e8e8e8" text-anchor="start" font-family="Liberation Sans" font-weight="bold" transform="scale(0.86,1)" >SAG T2 FLAIR FS 3D 0.9 ISO_MPR_tra</text><text x="2.3255813953488373" y="27.1" font-size="7.8" fill="#e8e8e8" text-anchor="start" font-family="Liberation Sans" font-weight="bold" transform="scale(0.86,1)" >MR</text><text x="2.3255813953488373" y="35.900000000000006" font-size="7.8" fill="#e8e8e8" text-anchor="start" font-family="Liberation Sans" font-weight="bold" transform="scale(0.86,1)" >11/20</text><text x="300.0" y="9.5" font-size="7.8" fill="#e8e8e8" text-anchor="end" font-family="Liberation Sans" font-weight="bold" transform="scale(0.86,1)" >Zoom: 65 %</text><text x="2.3255813953488373" y="162" font-size="7.8" fill="#e8e8e8" text-anchor="start" font-family="Liberation Sans" font-weight="bold" transform="scale(0.86,1)" >L: 257</text><text x="2.3255813953488373" y="171" font-size="7.8" fill="#e8e8e8" text-anchor="start" font-family="Liberation Sans" font-weight="bold" transform="scale(0.86,1)" >W: 553</text><text x="2.3255813953488373" y="186.5" font-size="7.8" fill="#e8e8e8" text-anchor="start" font-family="Liberation Sans" font-weight="bold" transform="scale(0.86,1)" >499x499 px</text><text x="2.3255813953488373" y="195.4" font-size="7.8" fill="#e8e8e8" text-anchor="start" font-family="Liberation Sans" font-weight="bold" transform="scale(0.86,1)" >0.461x0.461 mm/px</text><text x="2.3255813953488373" y="204.3" font-size="7.8" fill="#e8e8e8" text-anchor="start" font-family="Liberation Sans" font-weight="bold" transform="scale(0.86,1)" >Thk: 5.000 mm</text><text x="284.8837209302326" y="180" font-size="7.2" fill="#e8e8e8" text-anchor="middle" font-family="Liberation Sans" font-weight="bold" transform="scale(0.86,1)" >A</text><text x="274.4186046511628" y="189" font-size="7.2" fill="#e8e8e8" text-anchor="middle" font-family="Liberation Sans" font-weight="bold" transform="scale(0.86,1)" >R</text><text x="295.34883720930236" y="189" font-size="7.2" fill="#e8e8e8" text-anchor="middle" font-family="Liberation Sans" font-weight="bold" transform="scale(0.86,1)" >L</text><text x="284.8837209302326" y="198" font-size="7.2" fill="#e8e8e8" text-anchor="middle" font-family="Liberation Sans" font-weight="bold" transform="scale(0.86,1)" >P</text></g><rect x="262" y="0" width="9" height="208" fill="#7e858e"/><rect x="262" y="1" width="9" height="12" fill="#9aa0a8"/><rect x="262" y="195" width="9" height="12" fill="#9aa0a8"/><path d="M264 9 L266.5 5 L269 9Z" fill="#eee"/><path d="M264 199 L266.5 203 L269 199Z" fill="#eee"/></g><g transform="translate(816,208)"><clipPath id="c31"><rect width="262" height="208"/></clipPath><g clip-path="url(#c31)"><g filter="url(#soft)"><g transform="translate(-6,-8) scale(1.15) rotate(6 120 100)"><path d="M163 208 C165 185 172 165 185 148 C196 132 202 112 201 92 C200 62 182 38 150 28 C118 20 80 30 58 54 C46 68 41 80 41 90 C41 98 38 104 33 112 C28 120 24 127 27 133 C30 140 33 146 31 156 C28 170 30 190 31 208 Z" fill="#444444"/><path d="M163 208 C165 185 172 165 185 148 C196 132 202 112 201 92 C200 62 182 38 150 28 C118 20 80 30 58 54 C46 68 41 80 41 90 C41 98 38 104 33 112 C28 120 24 127 27 133 C30 140 33 146 31 156 C28 170 30 190 31 208 Z" fill="#000" filter="url(#tex81)" opacity="0.324"/><path d="M167 208 C169 185 176 165 189 148 C200 132 206 112 205 92 C204 60 185 34 150 24 C116 15 76 27 54 52 C43 65 38 78 38 90" fill="none" stroke="#d4d4d4" stroke-width="3"/><path d="M160 208 C162 188 168 170 180 154 C188 144 192 136 194 128" fill="none" stroke="#e6e6e6" stroke-width="3.5"/><path d="M176 150 C189 132 196 112 195 92 C194 64 178 44 150 35 C120 27 86 36 66 58 C56 70 50 80 50 92" fill="none" stroke="#0c0c0c" stroke-width="6"/><path d="M59 84 C58 60 80 42 112 38 C146 34 176 44 188 70 C196 90 192 118 182 132 C174 144 160 148 148 144 C140 136 136 122 124 110 C112 102 96 104 78 102 C64 100 59 94 59 84 Z" fill="#a4a4a4"/><path d="M59 84 C58 60 80 42 112 38 C146 34 176 44 188 70 C196 90 192 118 182 132 C174 144 160 148 148 144 C140 136 136 122 124 110 C112 102 96 104 78 102 C64 100 59 94 59 84 Z" fill="#000" filter="url(#tex82)" opacity="0.230"/><path d="M59 84 C58 60 80 42 112 38 C146 34 176 44 188 70 C196 90 192 118 182 132 C174 144 160 148 148 144 C140 136 136 122 124 110 C112 102 96 104 78 102 C64 100 59 94 59 84 Z" fill="url(#glow)"/><path d="M90 84 C96 66 124 60 142 68 C152 72 156 80 152 88" fill="none" stroke="#e2e2e2" stroke-width="5"/><path d="M98 86 C108 74 128 72 140 80 C136 92 112 96 98 86Z" fill="#3a3a3a"/><path d="M48 104 C70 98 100 104 112 112 C110 124 96 132 80 130 C64 128 52 122 44 114Z" fill="#121212"/><path d="M40 140 C60 138 80 142 92 148 C88 156 70 158 44 152Z" fill="#1a1a1a"/><path d="M112 100 C128 108 138 124 138 150 L140 208 L124 208 C124 170 122 140 108 116Z" fill="#a6a6a6"/><path d="M106 150 L112 208 M96 148 L100 208" stroke="#222" stroke-width="4"/><path d="M147 160 C160 170 150 190 152 208" stroke="#cfcfcf" stroke-width="2.5" fill="none"/><ellipse cx="70" cy="178" rx="36" ry="32" fill="#585858"/><path d="M34 178 a36 32 0 1 0 72 0 a36 32 0 1 0 -72 0" fill="#000" filter="url(#tex83)" opacity="0.216"/></g></g><text x="2.3255813953488373" y="9.5" font-size="7.8" fill="#e8e8e8" text-anchor="start" font-family="Liberation Sans" font-weight="bold" transform="scale(0.86,1)" >Ser: 8</text><text x="2.3255813953488373" y="18.3" font-size="7.8" fill="#e8e8e8" text-anchor="start" font-family="Liberation Sans" font-weight="bold" transform="scale(0.86,1)" >SAG T2 FLAIR FS 3D 0.9 ISO_MPR_SAG</text><text x="2.3255813953488373" y="27.1" font-size="7.8" fill="#e8e8e8" text-anchor="start" font-family="Liberation Sans" font-weight="bold" transform="scale(0.86,1)" >MR</text><text x="2.3255813953488373" y="35.900000000000006" font-size="7.8" fill="#e8e8e8" text-anchor="start" font-family="Liberation Sans" font-weight="bold" transform="scale(0.86,1)" >11/20</text><text x="300.0" y="9.5" font-size="7.8" fill="#e8e8e8" text-anchor="end" font-family="Liberation Sans" font-weight="bold" transform="scale(0.86,1)" >Zoom: 62 %</text><text x="2.3255813953488373" y="162" font-size="7.8" fill="#e8e8e8" text-anchor="start" font-family="Liberation Sans" font-weight="bold" transform="scale(0.86,1)" >L: 218</text><text x="2.3255813953488373" y="171" font-size="7.8" fill="#e8e8e8" text-anchor="start" font-family="Liberation Sans" font-weight="bold" transform="scale(0.86,1)" >W: 496</text><text x="2.3255813953488373" y="186.5" font-size="7.8" fill="#e8e8e8" text-anchor="start" font-family="Liberation Sans" font-weight="bold" transform="scale(0.86,1)" >521x521 px</text><text x="2.3255813953488373" y="195.4" font-size="7.8" fill="#e8e8e8" text-anchor="start" font-family="Liberation Sans" font-weight="bold" transform="scale(0.86,1)" >0.461x0.461 mm/px</text><text x="2.3255813953488373" y="204.3" font-size="7.8" fill="#e8e8e8" text-anchor="start" font-family="Liberation Sans" font-weight="bold" transform="scale(0.86,1)" >Thk: 5.000 mm</text><text x="284.8837209302326" y="180" font-size="7.2" fill="#e8e8e8" text-anchor="middle" font-family="Liberation Sans" font-weight="bold" transform="scale(0.86,1)" >H</text><text x="274.4186046511628" y="189" font-size="7.2" fill="#e8e8e8" text-anchor="middle" font-family="Liberation Sans" font-weight="bold" transform="scale(0.86,1)" >A</text><text x="295.34883720930236" y="189" font-size="7.2" fill="#e8e8e8" text-anchor="middle" font-family="Liberation Sans" font-weight="bold" transform="scale(0.86,1)" >P</text><text x="284.8837209302326" y="198" font-size="7.2" fill="#e8e8e8" text-anchor="middle" font-family="Liberation Sans" font-weight="bold" transform="scale(0.86,1)" >F</text></g><rect x="262" y="0" width="9" height="208" fill="#7e858e"/><rect x="262" y="1" width="9" height="12" fill="#9aa0a8"/><rect x="262" y="195" width="9" height="12" fill="#9aa0a8"/><path d="M264 9 L266.5 5 L269 9Z" fill="#eee"/><path d="M264 199 L266.5 203 L269 199Z" fill="#eee"/></g><g transform="translate(0,416)"><clipPath id="c02"><rect width="262" height="208"/></clipPath><g clip-path="url(#c02)"><g filter="url(#soft)"><ellipse cx="130.5" cy="107" rx="73.5" ry="97" fill="#3a3a3a" stroke="#5a5a5a" stroke-width="2.6"/><ellipse cx="130.5" cy="107" rx="67.5" ry="91" fill="#111"/><path d="M67.0 110 a63.5 85 0 1 0 127.0 0 a63.5 85 0 1 0 -127.0 0" fill="#b6b6b6"/><path d="M67.0 110 a63.5 85 0 1 0 127.0 0 a63.5 85 0 1 0 -127.0 0" fill="#000" filter="url(#tex91)" opacity="0.216"/><path d="M67.0 110 a63.5 85 0 1 0 127.0 0 a63.5 85 0 1 0 -127.0 0" fill="url(#glow)"/><ellipse cx="130.5" cy="26" rx="22.05" ry="12.610000000000001" fill="#0e0e0e"/><path d="M117.5 79 L130.5 95 L143.5 79 L135.5 103 L125.5 103Z" fill="#2a2a2a"/><path d="M100.5 133 Q104.5 153 112.5 147 M160.5 133 Q156.5 153 148.5 147" stroke="#242424" stroke-width="7" fill="none"/><path d="M130.5 103 L130.5 190" stroke="#000" stroke-opacity="0.45" stroke-width="2"/><ellipse cx="130.5" cy="115" rx="30.869999999999997" ry="48.5" fill="#fff" fill-opacity="0.16"/></g><text x="2.3255813953488373" y="9.5" font-size="7.8" fill="#e8e8e8" text-anchor="start" font-family="Liberation Sans" font-weight="bold" transform="scale(0.86,1)" >Ser: 9</text><text x="2.3255813953488373" y="18.3" font-size="7.8" fill="#e8e8e8" text-anchor="start" font-family="Liberation Sans" font-weight="bold" transform="scale(0.86,1)" >AX T2 EG HR</text><text x="2.3255813953488373" y="27.1" font-size="7.8" fill="#e8e8e8" text-anchor="start" font-family="Liberation Sans" font-weight="bold" transform="scale(0.86,1)" >MR</text><text x="2.3255813953488373" y="35.900000000000006" font-size="7.8" fill="#e8e8e8" text-anchor="start" font-family="Liberation Sans" font-weight="bold" transform="scale(0.86,1)" >21/40</text><text x="300.0" y="9.5" font-size="7.8" fill="#e8e8e8" text-anchor="end" font-family="Liberation Sans" font-weight="bold" transform="scale(0.86,1)" >Zoom: 101 %</text><text x="2.3255813953488373" y="162" font-size="7.8" fill="#e8e8e8" text-anchor="start" font-family="Liberation Sans" font-weight="bold" transform="scale(0.86,1)" >L: 761</text><text x="2.3255813953488373" y="171" font-size="7.8" fill="#e8e8e8" text-anchor="start" font-family="Liberation Sans" font-weight="bold" transform="scale(0.86,1)" >W: 1542</text><text x="2.3255813953488373" y="186.5" font-size="7.8" fill="#e8e8e8" text-anchor="start" font-family="Liberation Sans" font-weight="bold" transform="scale(0.86,1)" >320x320 px</text><text x="2.3255813953488373" y="195.4" font-size="7.8" fill="#e8e8e8" text-anchor="start" font-family="Liberation Sans" font-weight="bold" transform="scale(0.86,1)" >0.688x0.688 mm/px</text><text x="2.3255813953488373" y="204.3" font-size="7.8" fill="#e8e8e8" text-anchor="start" font-family="Liberation Sans" font-weight="bold" transform="scale(0.86,1)" >Thk: 3.000 mm</text><text x="284.8837209302326" y="180" font-size="7.2" fill="#e8e8e8" text-anchor="middle" font-family="Liberation Sans" font-weight="bold" transform="scale(0.86,1)" >A</text><text x="274.4186046511628" y="189" font-size="7.2" fill="#e8e8e8" text-anchor="middle" font-family="Liberation Sans" font-weight="bold" transform="scale(0.86,1)" >R</text><text x="295.34883720930236" y="189" font-size="7.2" fill="#e8e8e8" text-anchor="middle" font-family="Liberation Sans" font-weight="bold" transform="scale(0.86,1)" >L</text><text x="284.8837209302326" y="198" font-size="7.2" fill="#e8e8e8" text-anchor="middle" font-family="Liberation Sans" font-weight="bold" transform="scale(0.86,1)" >P</text></g><rect x="262" y="0" width="9" height="208" fill="#7e858e"/><rect x="262" y="1" width="9" height="12" fill="#9aa0a8"/><rect x="262" y="195" width="9" height="12" fill="#9aa0a8"/><path d="M264 9 L266.5 5 L269 9Z" fill="#eee"/><path d="M264 199 L266.5 203 L269 199Z" fill="#eee"/></g><g transform="translate(271,416)"><clipPath id="c12"><rect width="262" height="208"/></clipPath><g clip-path="url(#c12)"><g filter="url(#soft)"><ellipse cx="130.5" cy="108.5" rx="73.5" ry="93.5" fill="#3a3a3a" stroke="#d8d8d8" stroke-width="2.6"/><ellipse cx="130.5" cy="108.5" rx="67.5" ry="87.5" fill="#111"/><path d="M67.0 111.5 a63.5 81.5 0 1 0 127.0 0 a63.5 81.5 0 1 0 -127.0 0" fill="#acacac"/><path d="M67.0 111.5 a63.5 81.5 0 1 0 127.0 0 a63.5 81.5 0 1 0 -127.0 0" fill="#000" filter="url(#tex101)" opacity="0.230"/><path d="M67.0 111.5 a63.5 81.5 0 1 0 127.0 0 a63.5 81.5 0 1 0 -127.0 0" fill="url(#glow)"/><ellipse cx="130.5" cy="31.0" rx="22.05" ry="12.155000000000001" fill="#0e0e0e"/><path d="M117.5 80.5 L130.5 96.5 L143.5 80.5 L135.5 104.5 L125.5 104.5Z" fill="#2a2a2a"/><path d="M100.5 134.5 Q104.5 154.5 112.5 148.5 M160.5 134.5 Q156.5 154.5 148.5 148.5" stroke="#242424" stroke-width="7" fill="none"/><path d="M130.5 104.5 L130.5 188.0" stroke="#000" stroke-opacity="0.45" stroke-width="2"/></g><text x="2.3255813953488373" y="9.5" font-size="7.8" fill="#e8e8e8" text-anchor="start" font-family="Liberation Sans" font-weight="bold" transform="scale(0.86,1)" >Ser: 10</text><text x="2.3255813953488373" y="18.3" font-size="7.8" fill="#e8e8e8" text-anchor="start" font-family="Liberation Sans" font-weight="bold" transform="scale(0.86,1)" >AX T1 MPRAGE FS GADO</text><text x="2.3255813953488373" y="27.1" font-size="7.8" fill="#e8e8e8" text-anchor="start" font-family="Liberation Sans" font-weight="bold" transform="scale(0.86,1)" >MR</text><text x="2.3255813953488373" y="35.900000000000006" font-size="7.8" fill="#e8e8e8" text-anchor="start" font-family="Liberation Sans" font-weight="bold" transform="scale(0.86,1)" >97/192</text><text x="300.0" y="9.5" font-size="7.8" fill="#e8e8e8" text-anchor="end" font-family="Liberation Sans" font-weight="bold" transform="scale(0.86,1)" >Zoom: 63 %</text><text x="2.3255813953488373" y="162" font-size="7.8" fill="#e8e8e8" text-anchor="start" font-family="Liberation Sans" font-weight="bold" transform="scale(0.86,1)" >L: 630</text><text x="2.3255813953488373" y="171" font-size="7.8" fill="#e8e8e8" text-anchor="start" font-family="Liberation Sans" font-weight="bold" transform="scale(0.86,1)" >W: 1273</text><text x="2.3255813953488373" y="186.5" font-size="7.8" fill="#e8e8e8" text-anchor="start" font-family="Liberation Sans" font-weight="bold" transform="scale(0.86,1)" >512x512 px</text><text x="2.3255813953488373" y="195.4" font-size="7.8" fill="#e8e8e8" text-anchor="start" font-family="Liberation Sans" font-weight="bold" transform="scale(0.86,1)" >0.449x0.449 mm/px</text><text x="2.3255813953488373" y="204.3" font-size="7.8" fill="#e8e8e8" text-anchor="start" font-family="Liberation Sans" font-weight="bold" transform="scale(0.86,1)" >Thk: 0.900 mm</text><text x="284.8837209302326" y="180" font-size="7.2" fill="#e8e8e8" text-anchor="middle" font-family="Liberation Sans" font-weight="bold" transform="scale(0.86,1)" >A</text><text x="274.4186046511628" y="189" font-size="7.2" fill="#e8e8e8" text-anchor="middle" font-family="Liberation Sans" font-weight="bold" transform="scale(0.86,1)" >R</text><text x="295.34883720930236" y="189" font-size="7.2" fill="#e8e8e8" text-anchor="middle" font-family="Liberation Sans" font-weight="bold" transform="scale(0.86,1)" >L</text><text x="284.8837209302326" y="198" font-size="7.2" fill="#e8e8e8" text-anchor="middle" font-family="Liberation Sans" font-weight="bold" transform="scale(0.86,1)" >P</text></g><rect x="262" y="0" width="9" height="208" fill="#7e858e"/><rect x="262" y="1" width="9" height="12" fill="#9aa0a8"/><rect x="262" y="195" width="9" height="12" fill="#9aa0a8"/><path d="M264 9 L266.5 5 L269 9Z" fill="#eee"/><path d="M264 199 L266.5 203 L269 199Z" fill="#eee"/></g><g transform="translate(543.5,416)"><clipPath id="c22"><rect width="262" height="208"/></clipPath><g clip-path="url(#c22)"><g filter="url(#soft)"><path d="M57 118 C55 60 83.32 15 131 15 C178.68 15 208 60 206 118 C206 132 202 144 196 158 L192 176 L76 176 L72 158 C61 144 57 132 57 118Z" fill="#2c2c2c"/><path d="M57 124 C55 60 83.32 15 131 15 C178.68 15 208 60 206 124" fill="none" stroke="#b4b4b4" stroke-width="2.6"/><path d="M63 118 C62 64 89.28 22 131 22 C172.72 22 201 64 200 118" fill="none" stroke="#0c0c0c" stroke-width="5"/><path d="M67 114 C66 66 92.25999999999999 28 131 28 C169.74 28 197 66 196 114 C194 128 161 132 147 120 C139 112 123 112 115 120 C101 132 69 128 67 114Z" fill="#a2a2a2"/><path d="M67 114 C66 66 92.25999999999999 28 131 28 C169.74 28 197 66 196 114 C194 128 161 132 147 120 C139 112 123 112 115 120 C101 132 69 128 67 114Z" fill="#000" filter="url(#tex111)" opacity="0.288"/><path d="M67 114 C66 66 92.25999999999999 28 131 28 C169.74 28 197 66 196 114 C194 128 161 132 147 120 C139 112 123 112 115 120 C101 132 69 128 67 114Z" fill="url(#glow)"/><path d="M118 61 L131 75 L144 61 L134 93 L128 93Z" fill="#1e1e1e"/><path d="M131 29 L131 59" stroke="#222" stroke-width="2"/><path d="M71 126 C111 120 151 120 192 126 L190 158 L188 176 L80 176 L78 158Z" fill="#2e2e2e"/><path d="M71 126 C111 120 151 120 192 126 L190 158 L188 176 L80 176 L78 158Z" fill="#000" filter="url(#tex114)" opacity="0.396"/><path d="M111 120 Q131 108 151 120 M131 114 L131 148 M131 148 L117 158 M131 148 L145 158" stroke="#eee" stroke-width="2.6" fill="none"/><ellipse cx="103" cy="152" rx="8" ry="6" fill="#e4e4e4"/><ellipse cx="159" cy="150" rx="7" ry="5" fill="#dcdcdc"/></g><text x="2.3255813953488373" y="9.5" font-size="7.8" fill="#e8e8e8" text-anchor="start" font-family="Liberation Sans" font-weight="bold" transform="scale(0.86,1)" >Ser: 11</text><text x="2.3255813953488373" y="18.3" font-size="7.8" fill="#e8e8e8" text-anchor="start" font-family="Liberation Sans" font-weight="bold" transform="scale(0.86,1)" >AX T1 MPRAGE FS GADO_MPR_cor</text><text x="2.3255813953488373" y="27.1" font-size="7.8" fill="#e8e8e8" text-anchor="start" font-family="Liberation Sans" font-weight="bold" transform="scale(0.86,1)" >MR</text><text x="2.3255813953488373" y="35.900000000000006" font-size="7.8" fill="#e8e8e8" text-anchor="start" font-family="Liberation Sans" font-weight="bold" transform="scale(0.86,1)" >11/20</text><text x="300.0" y="9.5" font-size="7.8" fill="#e8e8e8" text-anchor="end" font-family="Liberation Sans" font-weight="bold" transform="scale(0.86,1)" >Zoom: 63 %</text><text x="2.3255813953488373" y="162" font-size="7.8" fill="#e8e8e8" text-anchor="start" font-family="Liberation Sans" font-weight="bold" transform="scale(0.86,1)" >L: 644</text><text x="2.3255813953488373" y="171" font-size="7.8" fill="#e8e8e8" text-anchor="start" font-family="Liberation Sans" font-weight="bold" transform="scale(0.86,1)" >W: 1314</text><text x="2.3255813953488373" y="186.5" font-size="7.8" fill="#e8e8e8" text-anchor="start" font-family="Liberation Sans" font-weight="bold" transform="scale(0.86,1)" >512x512 px</text><text x="2.3255813953488373" y="195.4" font-size="7.8" fill="#e8e8e8" text-anchor="start" font-family="Liberation Sans" font-weight="bold" transform="scale(0.86,1)" >0.449x0.449 mm/px</text><text x="2.3255813953488373" y="204.3" font-size="7.8" fill="#e8e8e8" text-anchor="start" font-family="Liberation Sans" font-weight="bold" transform="scale(0.86,1)" >Thk: 5.000 mm</text><text x="284.8837209302326" y="180" font-size="7.2" fill="#e8e8e8" text-anchor="middle" font-family="Liberation Sans" font-weight="bold" transform="scale(0.86,1)" >H</text><text x="274.4186046511628" y="189" font-size="7.2" fill="#e8e8e8" text-anchor="middle" font-family="Liberation Sans" font-weight="bold" transform="scale(0.86,1)" >R</text><text x="295.34883720930236" y="189" font-size="7.2" fill="#e8e8e8" text-anchor="middle" font-family="Liberation Sans" font-weight="bold" transform="scale(0.86,1)" >L</text><text x="284.8837209302326" y="198" font-size="7.2" fill="#e8e8e8" text-anchor="middle" font-family="Liberation Sans" font-weight="bold" transform="scale(0.86,1)" >F</text></g><rect x="262" y="0" width="9" height="208" fill="#7e858e"/><rect x="262" y="1" width="9" height="12" fill="#9aa0a8"/><rect x="262" y="195" width="9" height="12" fill="#9aa0a8"/><path d="M264 9 L266.5 5 L269 9Z" fill="#eee"/><path d="M264 199 L266.5 203 L269 199Z" fill="#eee"/></g><g transform="translate(816,416)"><clipPath id="c32"><rect width="262" height="208"/></clipPath><g clip-path="url(#c32)"><g filter="url(#soft)"><ellipse cx="129.5" cy="110" rx="72.5" ry="92" fill="#3a3a3a" stroke="#d0d0d0" stroke-width="2.6"/><ellipse cx="129.5" cy="110" rx="66.5" ry="86" fill="#111"/><path d="M67.0 113 a62.5 80 0 1 0 125.0 0 a62.5 80 0 1 0 -125.0 0" fill="#a6a6a6"/><path d="M67.0 113 a62.5 80 0 1 0 125.0 0 a62.5 80 0 1 0 -125.0 0" fill="#000" filter="url(#tex121)" opacity="0.230"/><path d="M67.0 113 a62.5 80 0 1 0 125.0 0 a62.5 80 0 1 0 -125.0 0" fill="url(#glow)"/><ellipse cx="129.5" cy="34" rx="21.75" ry="11.96" fill="#0e0e0e"/><path d="M116.5 82 L129.5 98 L142.5 82 L134.5 106 L124.5 106Z" fill="#2a2a2a"/><path d="M99.5 136 Q103.5 156 111.5 150 M159.5 136 Q155.5 156 147.5 150" stroke="#242424" stroke-width="7" fill="none"/><path d="M129.5 106 L129.5 188" stroke="#000" stroke-opacity="0.45" stroke-width="2"/></g><text x="2.3255813953488373" y="9.5" font-size="7.8" fill="#e8e8e8" text-anchor="start" font-family="Liberation Sans" font-weight="bold" transform="scale(0.86,1)" >Ser: 12</text><text x="2.3255813953488373" y="18.3" font-size="7.8" fill="#e8e8e8" text-anchor="start" font-family="Liberation Sans" font-weight="bold" transform="scale(0.86,1)" >AX T1 MPRAGE FS GADO_MPR_tra</text><text x="2.3255813953488373" y="27.1" font-size="7.8" fill="#e8e8e8" text-anchor="start" font-family="Liberation Sans" font-weight="bold" transform="scale(0.86,1)" >MR</text><text x="2.3255813953488373" y="35.900000000000006" font-size="7.8" fill="#e8e8e8" text-anchor="start" font-family="Liberation Sans" font-weight="bold" transform="scale(0.86,1)" >11/20</text><text x="300.0" y="9.5" font-size="7.8" fill="#e8e8e8" text-anchor="end" font-family="Liberation Sans" font-weight="bold" transform="scale(0.86,1)" >Zoom: 63 %</text><text x="2.3255813953488373" y="162" font-size="7.8" fill="#e8e8e8" text-anchor="start" font-family="Liberation Sans" font-weight="bold" transform="scale(0.86,1)" >L: 677</text><text x="2.3255813953488373" y="171" font-size="7.8" fill="#e8e8e8" text-anchor="start" font-family="Liberation Sans" font-weight="bold" transform="scale(0.86,1)" >W: 1313</text><text x="2.3255813953488373" y="186.5" font-size="7.8" fill="#e8e8e8" text-anchor="start" font-family="Liberation Sans" font-weight="bold" transform="scale(0.86,1)" >512x512 px</text><text x="2.3255813953488373" y="195.4" font-size="7.8" fill="#e8e8e8" text-anchor="start" font-family="Liberation Sans" font-weight="bold" transform="scale(0.86,1)" >0.449x0.449 mm/px</text><text x="2.3255813953488373" y="204.3" font-size="7.8" fill="#e8e8e8" text-anchor="start" font-family="Liberation Sans" font-weight="bold" transform="scale(0.86,1)" >Thk: 5.000 mm</text><text x="284.8837209302326" y="180" font-size="7.2" fill="#e8e8e8" text-anchor="middle" font-family="Liberation Sans" font-weight="bold" transform="scale(0.86,1)" >A</text><text x="274.4186046511628" y="189" font-size="7.2" fill="#e8e8e8" text-anchor="middle" font-family="Liberation Sans" font-weight="bold" transform="scale(0.86,1)" >R</text><text x="295.34883720930236" y="189" font-size="7.2" fill="#e8e8e8" text-anchor="middle" font-family="Liberation Sans" font-weight="bold" transform="scale(0.86,1)" >L</text><text x="284.8837209302326" y="198" font-size="7.2" fill="#e8e8e8" text-anchor="middle" font-family="Liberation Sans" font-weight="bold" transform="scale(0.86,1)" >P</text></g><rect x="262" y="0" width="9" height="208" fill="#7e858e"/><rect x="262" y="1" width="9" height="12" fill="#9aa0a8"/><rect x="262" y="195" width="9" height="12" fill="#9aa0a8"/><path d="M264 9 L266.5 5 L269 9Z" fill="#eee"/><path d="M264 199 L266.5 203 L269 199Z" fill="#eee"/></g><rect x="0" y="207.5" width="1087" height="1.5" fill="#6a6a6a"/><rect x="0" y="415.5" width="1087" height="1.5" fill="#6a6a6a"/><rect x="0" y="0" width="1087" height="1" fill="#555"/><rect x="271" y="208.5" width="262" height="207.5" fill="none" stroke="#888" stroke-width="1.2"/></symbol><symbol id="mrit" viewBox="0 0 1087 624"><rect width="1087" height="624" fill="#000"/><g transform="translate(0,0)"><clipPath id="t00"><rect width="262" height="208"/></clipPath><g clip-path="url(#t00)"><g filter="url(#softt)"><g transform="translate(1,6)"><path d="M163 208 C165 185 172 165 185 148 C196 132 202 112 201 92 C200 62 182 38 150 28 C118 20 80 30 58 54 C46 68 41 80 41 90 C41 98 38 104 33 112 C28 120 24 127 27 133 C30 140 33 146 31 156 C28 170 30 190 31 208 Z" fill="#444444"/><path d="M163 208 C165 185 172 165 185 148 C196 132 202 112 201 92 C200 62 182 38 150 28 C118 20 80 30 58 54 C46 68 41 80 41 90 C41 98 38 104 33 112 C28 120 24 127 27 133 C30 140 33 146 31 156 C28 170 30 190 31 208 Z" fill="#000" filter="url(#tex11)" opacity="0.135"/><path d="M167 208 C169 185 176 165 189 148 C200 132 206 112 205 92 C204 60 185 34 150 24 C116 15 76 27 54 52 C43 65 38 78 38 90" fill="none" stroke="#d4d4d4" stroke-width="3"/><path d="M160 208 C162 188 168 170 180 154 C188 144 192 136 194 128" fill="none" stroke="#e6e6e6" stroke-width="3.5"/><path d="M176 150 C189 132 196 112 195 92 C194 64 178 44 150 35 C120 27 86 36 66 58 C56 70 50 80 50 92" fill="none" stroke="#0c0c0c" stroke-width="6"/><path d="M59 84 C58 60 80 42 112 38 C146 34 176 44 188 70 C196 90 192 118 182 132 C174 144 160 148 148 144 C140 136 136 122 124 110 C112 102 96 104 78 102 C64 100 59 94 59 84 Z" fill="#8c8c8c"/><path d="M59 84 C58 60 80 42 112 38 C146 34 176 44 188 70 C196 90 192 118 182 132 C174 144 160 148 148 144 C140 136 136 122 124 110 C112 102 96 104 78 102 C64 100 59 94 59 84 Z" fill="#000" filter="url(#tex12)" opacity="0.096"/><path d="M59 84 C58 60 80 42 112 38 C146 34 176 44 188 70 C196 90 192 118 182 132 C174 144 160 148 148 144 C140 136 136 122 124 110 C112 102 96 104 78 102 C64 100 59 94 59 84 Z" fill="url(#glow)"/><path d="M90 84 C96 66 124 60 142 68 C152 72 156 80 152 88" fill="none" stroke="#e2e2e2" stroke-width="5"/><path d="M98 86 C108 74 128 72 140 80 C136 92 112 96 98 86Z" fill="#3a3a3a"/><path d="M48 104 C70 98 100 104 112 112 C110 124 96 132 80 130 C64 128 52 122 44 114Z" fill="#121212"/><path d="M40 140 C60 138 80 142 92 148 C88 156 70 158 44 152Z" fill="#1a1a1a"/><path d="M112 100 C128 108 138 124 138 150 L140 208 L124 208 C124 170 122 140 108 116Z" fill="#a6a6a6"/><path d="M106 150 L112 208 M96 148 L100 208" stroke="#222" stroke-width="4"/><path d="M147 160 C160 170 150 190 152 208" stroke="#cfcfcf" stroke-width="2.5" fill="none"/></g></g><text x="2.3255813953488373" y="9.5" font-size="7.8" fill="#e8e8e8" text-anchor="start" font-family="Liberation Sans" font-weight="bold" transform="scale(0.86,1)" >Ser: 1</text><text x="2.3255813953488373" y="18.3" font-size="7.8" fill="#e8e8e8" text-anchor="start" font-family="Liberation Sans" font-weight="bold" transform="scale(0.86,1)" >AAHead_Scout ISO</text><text x="2.3255813953488373" y="27.1" font-size="7.8" fill="#e8e8e8" text-anchor="start" font-family="Liberation Sans" font-weight="bold" transform="scale(0.86,1)" >MR</text><text x="2.3255813953488373" y="35.900000000000006" font-size="7.8" fill="#e8e8e8" text-anchor="start" font-family="Liberation Sans" font-weight="bold" transform="scale(0.86,1)" >65/128</text><text x="300.0" y="9.5" font-size="7.8" fill="#e8e8e8" text-anchor="end" font-family="Liberation Sans" font-weight="bold" transform="scale(0.86,1)" >Zoom: 203 %</text><text x="2.3255813953488373" y="162" font-size="7.8" fill="#e8e8e8" text-anchor="start" font-family="Liberation Sans" font-weight="bold" transform="scale(0.86,1)" >L: 402</text><text x="2.3255813953488373" y="171" font-size="7.8" fill="#e8e8e8" text-anchor="start" font-family="Liberation Sans" font-weight="bold" transform="scale(0.86,1)" >W: 840</text><text x="2.3255813953488373" y="186.5" font-size="7.8" fill="#e8e8e8" text-anchor="start" font-family="Liberation Sans" font-weight="bold" transform="scale(0.86,1)" >160x160 px</text><text x="2.3255813953488373" y="195.4" font-size="7.8" fill="#e8e8e8" text-anchor="start" font-family="Liberation Sans" font-weight="bold" transform="scale(0.86,1)" >1.625x1.625 mm/px</text><text x="2.3255813953488373" y="204.3" font-size="7.8" fill="#e8e8e8" text-anchor="start" font-family="Liberation Sans" font-weight="bold" transform="scale(0.86,1)" >Thk: 1.600 mm</text><text x="284.8837209302326" y="180" font-size="7.2" fill="#e8e8e8" text-anchor="middle" font-family="Liberation Sans" font-weight="bold" transform="scale(0.86,1)" >H</text><text x="274.4186046511628" y="189" font-size="7.2" fill="#e8e8e8" text-anchor="middle" font-family="Liberation Sans" font-weight="bold" transform="scale(0.86,1)" >A</text><text x="295.34883720930236" y="189" font-size="7.2" fill="#e8e8e8" text-anchor="middle" font-family="Liberation Sans" font-weight="bold" transform="scale(0.86,1)" >P</text><text x="284.8837209302326" y="198" font-size="7.2" fill="#e8e8e8" text-anchor="middle" font-family="Liberation Sans" font-weight="bold" transform="scale(0.86,1)" >F</text></g><rect x="262" y="0" width="9" height="208" fill="#7e858e"/><rect x="262" y="1" width="9" height="12" fill="#9aa0a8"/><rect x="262" y="195" width="9" height="12" fill="#9aa0a8"/><path d="M264 9 L266.5 5 L269 9Z" fill="#eee"/><path d="M264 199 L266.5 203 L269 199Z" fill="#eee"/></g><g transform="translate(271,0)"><clipPath id="t10"><rect width="262" height="208"/></clipPath><g clip-path="url(#t10)"><g filter="url(#softt)"><g transform="translate(-3,-4) scale(1.1)"><path d="M163 208 C165 185 172 165 185 148 C196 132 202 112 201 92 C200 62 182 38 150 28 C118 20 80 30 58 54 C46 68 41 80 41 90 C41 98 38 104 33 112 C28 120 24 127 27 133 C30 140 33 146 31 156 C28 170 30 190 31 208 Z" fill="#444444"/><path d="M163 208 C165 185 172 165 185 148 C196 132 202 112 201 92 C200 62 182 38 150 28 C118 20 80 30 58 54 C46 68 41 80 41 90 C41 98 38 104 33 112 C28 120 24 127 27 133 C30 140 33 146 31 156 C28 170 30 190 31 208 Z" fill="#000" filter="url(#tex21)" opacity="0.135"/><path d="M167 208 C169 185 176 165 189 148 C200 132 206 112 205 92 C204 60 185 34 150 24 C116 15 76 27 54 52 C43 65 38 78 38 90" fill="none" stroke="#d4d4d4" stroke-width="3"/><path d="M160 208 C162 188 168 170 180 154 C188 144 192 136 194 128" fill="none" stroke="#e6e6e6" stroke-width="3.5"/><path d="M176 150 C189 132 196 112 195 92 C194 64 178 44 150 35 C120 27 86 36 66 58 C56 70 50 80 50 92" fill="none" stroke="#0c0c0c" stroke-width="6"/><path d="M59 84 C58 60 80 42 112 38 C146 34 176 44 188 70 C196 90 192 118 182 132 C174 144 160 148 148 144 C140 136 136 122 124 110 C112 102 96 104 78 102 C64 100 59 94 59 84 Z" fill="#969696"/><path d="M59 84 C58 60 80 42 112 38 C146 34 176 44 188 70 C196 90 192 118 182 132 C174 144 160 148 148 144 C140 136 136 122 124 110 C112 102 96 104 78 102 C64 100 59 94 59 84 Z" fill="#000" filter="url(#tex22)" opacity="0.096"/><path d="M59 84 C58 60 80 42 112 38 C146 34 176 44 188 70 C196 90 192 118 182 132 C174 144 160 148 148 144 C140 136 136 122 124 110 C112 102 96 104 78 102 C64 100 59 94 59 84 Z" fill="url(#glow)"/><path d="M90 84 C96 66 124 60 142 68 C152 72 156 80 152 88" fill="none" stroke="#e2e2e2" stroke-width="5"/><path d="M98 86 C108 74 128 72 140 80 C136 92 112 96 98 86Z" fill="#3a3a3a"/><path d="M48 104 C70 98 100 104 112 112 C110 124 96 132 80 130 C64 128 52 122 44 114Z" fill="#121212"/><path d="M40 140 C60 138 80 142 92 148 C88 156 70 158 44 152Z" fill="#1a1a1a"/><path d="M112 100 C128 108 138 124 138 150 L140 208 L124 208 C124 170 122 140 108 116Z" fill="#a6a6a6"/><path d="M106 150 L112 208 M96 148 L100 208" stroke="#222" stroke-width="4"/><path d="M147 160 C160 170 150 190 152 208" stroke="#cfcfcf" stroke-width="2.5" fill="none"/><ellipse cx="70" cy="178" rx="36" ry="32" fill="#8a8a8a"/><path d="M34 178 a36 32 0 1 0 72 0 a36 32 0 1 0 -72 0" fill="#000" filter="url(#tex23)" opacity="0.090"/></g></g><text x="2.3255813953488373" y="9.5" font-size="7.8" fill="#e8e8e8" text-anchor="start" font-family="Liberation Sans" font-weight="bold" transform="scale(0.86,1)" >Ser: 2</text><text x="2.3255813953488373" y="18.3" font-size="7.8" fill="#e8e8e8" text-anchor="start" font-family="Liberation Sans" font-weight="bold" transform="scale(0.86,1)" >AAHead_Scout ISO_MPR_sag</text><text x="2.3255813953488373" y="27.1" font-size="7.8" fill="#e8e8e8" text-anchor="start" font-family="Liberation Sans" font-weight="bold" transform="scale(0.86,1)" >MR</text><text x="2.3255813953488373" y="35.900000000000006" font-size="7.8" fill="#e8e8e8" text-anchor="start" font-family="Liberation Sans" font-weight="bold" transform="scale(0.86,1)" >3/5</text><text x="300.0" y="9.5" font-size="7.8" fill="#e8e8e8" text-anchor="end" font-family="Liberation Sans" font-weight="bold" transform="scale(0.86,1)" >Zoom: 200 %</text><text x="2.3255813953488373" y="162" font-size="7.8" fill="#e8e8e8" text-anchor="start" font-family="Liberation Sans" font-weight="bold" transform="scale(0.86,1)" >L: 400</text><text x="2.3255813953488373" y="171" font-size="7.8" fill="#e8e8e8" text-anchor="start" font-family="Liberation Sans" font-weight="bold" transform="scale(0.86,1)" >W: 834</text><text x="2.3255813953488373" y="186.5" font-size="7.8" fill="#e8e8e8" text-anchor="start" font-family="Liberation Sans" font-weight="bold" transform="scale(0.86,1)" >162x162 px</text><text x="2.3255813953488373" y="195.4" font-size="7.8" fill="#e8e8e8" text-anchor="start" font-family="Liberation Sans" font-weight="bold" transform="scale(0.86,1)" >1.600x1.600 mm/px</text><text x="2.3255813953488373" y="204.3" font-size="7.8" fill="#e8e8e8" text-anchor="start" font-family="Liberation Sans" font-weight="bold" transform="scale(0.86,1)" >Thk: 1.600 mm</text><text x="284.8837209302326" y="180" font-size="7.2" fill="#e8e8e8" text-anchor="middle" font-family="Liberation Sans" font-weight="bold" transform="scale(0.86,1)" >H</text><text x="274.4186046511628" y="189" font-size="7.2" fill="#e8e8e8" text-anchor="middle" font-family="Liberation Sans" font-weight="bold" transform="scale(0.86,1)" >A</text><text x="295.34883720930236" y="189" font-size="7.2" fill="#e8e8e8" text-anchor="middle" font-family="Liberation Sans" font-weight="bold" transform="scale(0.86,1)" >P</text><text x="284.8837209302326" y="198" font-size="7.2" fill="#e8e8e8" text-anchor="middle" font-family="Liberation Sans" font-weight="bold" transform="scale(0.86,1)" >F</text></g><rect x="262" y="0" width="9" height="208" fill="#7e858e"/><rect x="262" y="1" width="9" height="12" fill="#9aa0a8"/><rect x="262" y="195" width="9" height="12" fill="#9aa0a8"/><path d="M264 9 L266.5 5 L269 9Z" fill="#eee"/><path d="M264 199 L266.5 203 L269 199Z" fill="#eee"/></g><g transform="translate(543.5,0)"><clipPath id="t20"><rect width="262" height="208"/></clipPath><g clip-path="url(#t20)"><g filter="url(#softt)"><path d="M70 112 C68 60 92.32 17 132 17 C171.68 17 196 60 194 112 C194 126 190 138 182 152 L178 198 L90 198 L86 152 C74 138 70 126 70 112Z" fill="#2c2c2c"/><path d="M70 118 C68 60 92.32 17 132 17 C171.68 17 196 60 194 118" fill="none" stroke="#b4b4b4" stroke-width="2.6"/><path d="M76 112 C75 64 97.28 24 132 24 C166.72 24 189 64 188 112" fill="none" stroke="#0c0c0c" stroke-width="5"/><path d="M80 108 C79 66 99.75999999999999 30 132 30 C164.24 30 185 66 184 108 C182 122 162 126 148 114 C140 106 124 106 116 114 C102 126 82 122 80 108Z" fill="#939393"/><path d="M80 108 C79 66 99.75999999999999 30 132 30 C164.24 30 185 66 184 108 C182 122 162 126 148 114 C140 106 124 106 116 114 C102 126 82 122 80 108Z" fill="#000" filter="url(#tex31)" opacity="0.120"/><path d="M80 108 C79 66 99.75999999999999 30 132 30 C164.24 30 185 66 184 108 C182 122 162 126 148 114 C140 106 124 106 116 114 C102 126 82 122 80 108Z" fill="url(#glow)"/><path d="M119 63 L132 77 L145 63 L135 95 L129 95Z" fill="#1e1e1e"/><path d="M132 31 L132 61" stroke="#222" stroke-width="2"/><path d="M84 120 C112 114 152 114 180 120 L176 152 L174 198 L94 198 L92 152Z" fill="#6a6a6a"/><path d="M84 120 C112 114 152 114 180 120 L176 152 L174 198 L94 198 L92 152Z" fill="#000" filter="url(#tex34)" opacity="0.165"/><path d="M86 124 Q132 146 178 124" fill="none" stroke="#cfcfcf" stroke-width="6" opacity="0.8"/><path d="M112 114 Q132 102 152 114 M132 108 L132 142 M132 142 L118 152 M132 142 L146 152" stroke="#eee" stroke-width="2.6" fill="none"/><ellipse cx="104" cy="146" rx="8" ry="6" fill="#e4e4e4"/><ellipse cx="160" cy="144" rx="7" ry="5" fill="#dcdcdc"/></g><text x="2.3255813953488373" y="9.5" font-size="7.8" fill="#e8e8e8" text-anchor="start" font-family="Liberation Sans" font-weight="bold" transform="scale(0.86,1)" >Ser: 3</text><text x="2.3255813953488373" y="18.3" font-size="7.8" fill="#e8e8e8" text-anchor="start" font-family="Liberation Sans" font-weight="bold" transform="scale(0.86,1)" >AAHead_Scout ISO_MPR_cor</text><text x="2.3255813953488373" y="27.1" font-size="7.8" fill="#e8e8e8" text-anchor="start" font-family="Liberation Sans" font-weight="bold" transform="scale(0.86,1)" >MR</text><text x="2.3255813953488373" y="35.900000000000006" font-size="7.8" fill="#e8e8e8" text-anchor="start" font-family="Liberation Sans" font-weight="bold" transform="scale(0.86,1)" >2/3</text><text x="300.0" y="9.5" font-size="7.8" fill="#e8e8e8" text-anchor="end" font-family="Liberation Sans" font-weight="bold" transform="scale(0.86,1)" >Zoom: 200 %</text><text x="2.3255813953488373" y="162" font-size="7.8" fill="#e8e8e8" text-anchor="start" font-family="Liberation Sans" font-weight="bold" transform="scale(0.86,1)" >L: 398</text><text x="2.3255813953488373" y="171" font-size="7.8" fill="#e8e8e8" text-anchor="start" font-family="Liberation Sans" font-weight="bold" transform="scale(0.86,1)" >W: 823</text><text x="2.3255813953488373" y="186.5" font-size="7.8" fill="#e8e8e8" text-anchor="start" font-family="Liberation Sans" font-weight="bold" transform="scale(0.86,1)" >162x162 px</text><text x="2.3255813953488373" y="195.4" font-size="7.8" fill="#e8e8e8" text-anchor="start" font-family="Liberation Sans" font-weight="bold" transform="scale(0.86,1)" >1.600x1.600 mm/px</text><text x="2.3255813953488373" y="204.3" font-size="7.8" fill="#e8e8e8" text-anchor="start" font-family="Liberation Sans" font-weight="bold" transform="scale(0.86,1)" >Thk: 1.600 mm</text><text x="284.8837209302326" y="180" font-size="7.2" fill="#e8e8e8" text-anchor="middle" font-family="Liberation Sans" font-weight="bold" transform="scale(0.86,1)" >H</text><text x="274.4186046511628" y="189" font-size="7.2" fill="#e8e8e8" text-anchor="middle" font-family="Liberation Sans" font-weight="bold" transform="scale(0.86,1)" >R</text><text x="295.34883720930236" y="189" font-size="7.2" fill="#e8e8e8" text-anchor="middle" font-family="Liberation Sans" font-weight="bold" transform="scale(0.86,1)" >L</text><text x="284.8837209302326" y="198" font-size="7.2" fill="#e8e8e8" text-anchor="middle" font-family="Liberation Sans" font-weight="bold" transform="scale(0.86,1)" >F</text></g><rect x="262" y="0" width="9" height="208" fill="#7e858e"/><rect x="262" y="1" width="9" height="12" fill="#9aa0a8"/><rect x="262" y="195" width="9" height="12" fill="#9aa0a8"/><path d="M264 9 L266.5 5 L269 9Z" fill="#eee"/><path d="M264 199 L266.5 203 L269 199Z" fill="#eee"/></g><g transform="translate(816,0)"><clipPath id="t30"><rect width="262" height="208"/></clipPath><g clip-path="url(#t30)"><g filter="url(#softt)"><ellipse cx="130" cy="101.5" rx="64" ry="81.5" fill="#3a3a3a" stroke="#c0c0c0" stroke-width="2.6"/><ellipse cx="130" cy="101.5" rx="58" ry="75.5" fill="#111"/><path d="M76 104.5 a54 69.5 0 1 0 108 0 a54 69.5 0 1 0 -108 0" fill="#9c9c9c"/><path d="M76 104.5 a54 69.5 0 1 0 108 0 a54 69.5 0 1 0 -108 0" fill="#000" filter="url(#tex41)" opacity="0.105"/><path d="M76 104.5 a54 69.5 0 1 0 108 0 a54 69.5 0 1 0 -108 0" fill="url(#glow)"/><ellipse cx="130" cy="36.0" rx="19.2" ry="10.595" fill="#0e0e0e"/><path d="M117 73.5 L130 89.5 L143 73.5 L135 97.5 L125 97.5Z" fill="#2a2a2a"/><path d="M100 127.5 Q104 147.5 112 141.5 M160 127.5 Q156 147.5 148 141.5" stroke="#242424" stroke-width="7" fill="none"/><path d="M130 97.5 L130 169.0" stroke="#000" stroke-opacity="0.45" stroke-width="2"/></g><text x="2.3255813953488373" y="9.5" font-size="7.8" fill="#e8e8e8" text-anchor="start" font-family="Liberation Sans" font-weight="bold" transform="scale(0.86,1)" >Ser: 4</text><text x="2.3255813953488373" y="18.3" font-size="7.8" fill="#e8e8e8" text-anchor="start" font-family="Liberation Sans" font-weight="bold" transform="scale(0.86,1)" >AAHead_Scout ISO_MPR_tra</text><text x="2.3255813953488373" y="27.1" font-size="7.8" fill="#e8e8e8" text-anchor="start" font-family="Liberation Sans" font-weight="bold" transform="scale(0.86,1)" >MR</text><text x="2.3255813953488373" y="35.900000000000006" font-size="7.8" fill="#e8e8e8" text-anchor="start" font-family="Liberation Sans" font-weight="bold" transform="scale(0.86,1)" >2/3</text><text x="300.0" y="9.5" font-size="7.8" fill="#e8e8e8" text-anchor="end" font-family="Liberation Sans" font-weight="bold" transform="scale(0.86,1)" >Zoom: 200 %</text><text x="2.3255813953488373" y="162" font-size="7.8" fill="#e8e8e8" text-anchor="start" font-family="Liberation Sans" font-weight="bold" transform="scale(0.86,1)" >L: 417</text><text x="2.3255813953488373" y="171" font-size="7.8" fill="#e8e8e8" text-anchor="start" font-family="Liberation Sans" font-weight="bold" transform="scale(0.86,1)" >W: 835</text><text x="2.3255813953488373" y="186.5" font-size="7.8" fill="#e8e8e8" text-anchor="start" font-family="Liberation Sans" font-weight="bold" transform="scale(0.86,1)" >162x162 px</text><text x="2.3255813953488373" y="195.4" font-size="7.8" fill="#e8e8e8" text-anchor="start" font-family="Liberation Sans" font-weight="bold" transform="scale(0.86,1)" >1.600x1.600 mm/px</text><text x="2.3255813953488373" y="204.3" font-size="7.8" fill="#e8e8e8" text-anchor="start" font-family="Liberation Sans" font-weight="bold" transform="scale(0.86,1)" >Thk: 1.600 mm</text><text x="284.8837209302326" y="180" font-size="7.2" fill="#e8e8e8" text-anchor="middle" font-family="Liberation Sans" font-weight="bold" transform="scale(0.86,1)" >A</text><text x="274.4186046511628" y="189" font-size="7.2" fill="#e8e8e8" text-anchor="middle" font-family="Liberation Sans" font-weight="bold" transform="scale(0.86,1)" >R</text><text x="295.34883720930236" y="189" font-size="7.2" fill="#e8e8e8" text-anchor="middle" font-family="Liberation Sans" font-weight="bold" transform="scale(0.86,1)" >L</text><text x="284.8837209302326" y="198" font-size="7.2" fill="#e8e8e8" text-anchor="middle" font-family="Liberation Sans" font-weight="bold" transform="scale(0.86,1)" >P</text></g><rect x="262" y="0" width="9" height="208" fill="#7e858e"/><rect x="262" y="1" width="9" height="12" fill="#9aa0a8"/><rect x="262" y="195" width="9" height="12" fill="#9aa0a8"/><path d="M264 9 L266.5 5 L269 9Z" fill="#eee"/><path d="M264 199 L266.5 203 L269 199Z" fill="#eee"/></g><g transform="translate(0,208)"><clipPath id="t01"><rect width="262" height="208"/></clipPath><g clip-path="url(#t01)"><g filter="url(#softt)"><g transform="translate(-6,-14) scale(1.17) rotate(4 120 100)"><path d="M163 208 C165 185 172 165 185 148 C196 132 202 112 201 92 C200 62 182 38 150 28 C118 20 80 30 58 54 C46 68 41 80 41 90 C41 98 38 104 33 112 C28 120 24 127 27 133 C30 140 33 146 31 156 C28 170 30 190 31 208 Z" fill="#444444"/><path d="M163 208 C165 185 172 165 185 148 C196 132 202 112 201 92 C200 62 182 38 150 28 C118 20 80 30 58 54 C46 68 41 80 41 90 C41 98 38 104 33 112 C28 120 24 127 27 133 C30 140 33 146 31 156 C28 170 30 190 31 208 Z" fill="#000" filter="url(#tex51)" opacity="0.135"/><path d="M167 208 C169 185 176 165 189 148 C200 132 206 112 205 92 C204 60 185 34 150 24 C116 15 76 27 54 52 C43 65 38 78 38 90" fill="none" stroke="#d4d4d4" stroke-width="3"/><path d="M160 208 C162 188 168 170 180 154 C188 144 192 136 194 128" fill="none" stroke="#e6e6e6" stroke-width="3.5"/><path d="M176 150 C189 132 196 112 195 92 C194 64 178 44 150 35 C120 27 86 36 66 58 C56 70 50 80 50 92" fill="none" stroke="#0c0c0c" stroke-width="6"/><path d="M59 84 C58 60 80 42 112 38 C146 34 176 44 188 70 C196 90 192 118 182 132 C174 144 160 148 148 144 C140 136 136 122 124 110 C112 102 96 104 78 102 C64 100 59 94 59 84 Z" fill="#7e7e7e"/><path d="M59 84 C58 60 80 42 112 38 C146 34 176 44 188 70 C196 90 192 118 182 132 C174 144 160 148 148 144 C140 136 136 122 124 110 C112 102 96 104 78 102 C64 100 59 94 59 84 Z" fill="#000" filter="url(#tex52)" opacity="0.180"/><path d="M59 84 C58 60 80 42 112 38 C146 34 176 44 188 70 C196 90 192 118 182 132 C174 144 160 148 148 144 C140 136 136 122 124 110 C112 102 96 104 78 102 C64 100 59 94 59 84 Z" fill="url(#glow)"/><path d="M90 84 C96 66 124 60 142 68 C152 72 156 80 152 88" fill="none" stroke="#e2e2e2" stroke-width="5"/><path d="M98 86 C108 74 128 72 140 80 C136 92 112 96 98 86Z" fill="#3a3a3a"/><path d="M48 104 C70 98 100 104 112 112 C110 124 96 132 80 130 C64 128 52 122 44 114Z" fill="#121212"/><path d="M40 140 C60 138 80 142 92 148 C88 156 70 158 44 152Z" fill="#1a1a1a"/><path d="M112 100 C128 108 138 124 138 150 L140 208 L124 208 C124 170 122 140 108 116Z" fill="#a6a6a6"/><path d="M106 150 L112 208 M96 148 L100 208" stroke="#222" stroke-width="4"/><path d="M147 160 C160 170 150 190 152 208" stroke="#cfcfcf" stroke-width="2.5" fill="none"/><ellipse cx="70" cy="178" rx="36" ry="32" fill="#606060"/><path d="M34 178 a36 32 0 1 0 72 0 a36 32 0 1 0 -72 0" fill="#000" filter="url(#tex53)" opacity="0.090"/></g></g><text x="2.3255813953488373" y="9.5" font-size="7.8" fill="#e8e8e8" text-anchor="start" font-family="Liberation Sans" font-weight="bold" transform="scale(0.86,1)" >Ser: 5</text><text x="2.3255813953488373" y="18.3" font-size="7.8" fill="#e8e8e8" text-anchor="start" font-family="Liberation Sans" font-weight="bold" transform="scale(0.86,1)" >SAG T2 FLAIR FS 3D 0.9 ISO</text><text x="2.3255813953488373" y="27.1" font-size="7.8" fill="#e8e8e8" text-anchor="start" font-family="Liberation Sans" font-weight="bold" transform="scale(0.86,1)" >MR</text><text x="2.3255813953488373" y="35.900000000000006" font-size="7.8" fill="#e8e8e8" text-anchor="start" font-family="Liberation Sans" font-weight="bold" transform="scale(0.86,1)" >89/176</text><text x="300.0" y="9.5" font-size="7.8" fill="#e8e8e8" text-anchor="end" font-family="Liberation Sans" font-weight="bold" transform="scale(0.86,1)" >Zoom: 63 %</text><text x="2.3255813953488373" y="162" font-size="7.8" fill="#e8e8e8" text-anchor="start" font-family="Liberation Sans" font-weight="bold" transform="scale(0.86,1)" >L: 217</text><text x="2.3255813953488373" y="171" font-size="7.8" fill="#e8e8e8" text-anchor="start" font-family="Liberation Sans" font-weight="bold" transform="scale(0.86,1)" >W: 498</text><text x="2.3255813953488373" y="186.5" font-size="7.8" fill="#e8e8e8" text-anchor="start" font-family="Liberation Sans" font-weight="bold" transform="scale(0.86,1)" >512x512 px</text><text x="2.3255813953488373" y="195.4" font-size="7.8" fill="#e8e8e8" text-anchor="start" font-family="Liberation Sans" font-weight="bold" transform="scale(0.86,1)" >0.461x0.461 mm/px</text><text x="2.3255813953488373" y="204.3" font-size="7.8" fill="#e8e8e8" text-anchor="start" font-family="Liberation Sans" font-weight="bold" transform="scale(0.86,1)" >Thk: 0.900 mm</text><text x="284.8837209302326" y="180" font-size="7.2" fill="#e8e8e8" text-anchor="middle" font-family="Liberation Sans" font-weight="bold" transform="scale(0.86,1)" >H</text><text x="274.4186046511628" y="189" font-size="7.2" fill="#e8e8e8" text-anchor="middle" font-family="Liberation Sans" font-weight="bold" transform="scale(0.86,1)" >A</text><text x="295.34883720930236" y="189" font-size="7.2" fill="#e8e8e8" text-anchor="middle" font-family="Liberation Sans" font-weight="bold" transform="scale(0.86,1)" >P</text><text x="284.8837209302326" y="198" font-size="7.2" fill="#e8e8e8" text-anchor="middle" font-family="Liberation Sans" font-weight="bold" transform="scale(0.86,1)" >F</text></g><rect x="262" y="0" width="9" height="208" fill="#7e858e"/><rect x="262" y="1" width="9" height="12" fill="#9aa0a8"/><rect x="262" y="195" width="9" height="12" fill="#9aa0a8"/><path d="M264 9 L266.5 5 L269 9Z" fill="#eee"/><path d="M264 199 L266.5 203 L269 199Z" fill="#eee"/></g><g transform="translate(271,208)"><clipPath id="t11"><rect width="262" height="208"/></clipPath><g clip-path="url(#t11)"><g filter="url(#softt)"><path d="M62 122 C60 60 86.52 16 131 16 C175.48000000000002 16 203 60 201 122 C201 136 197 148 184 162 L180 208 L86 208 L82 162 C66 148 62 136 62 122Z" fill="#2c2c2c"/><path d="M62 128 C60 60 86.52 16 131 16 C175.48000000000002 16 203 60 201 128" fill="none" stroke="#b4b4b4" stroke-width="2.6"/><path d="M68 122 C67 64 92.08 23 131 23 C169.92000000000002 23 196 64 195 122" fill="none" stroke="#0c0c0c" stroke-width="5"/><path d="M72 118 C71 66 94.86 29 131 29 C167.14 29 192 66 191 118 C189 132 161 136 147 124 C139 116 123 116 115 124 C101 136 74 132 72 118Z" fill="#aaaaaa"/><path d="M72 118 C71 66 94.86 29 131 29 C167.14 29 192 66 191 118 C189 132 161 136 147 124 C139 116 123 116 115 124 C101 136 74 132 72 118Z" fill="#000" filter="url(#tex61)" opacity="0.120"/><path d="M72 118 C71 66 94.86 29 131 29 C167.14 29 192 66 191 118 C189 132 161 136 147 124 C139 116 123 116 115 124 C101 136 74 132 72 118Z" fill="url(#glow)"/><path d="M118 62 L131 76 L144 62 L134 94 L128 94Z" fill="#1e1e1e"/><path d="M131 30 L131 60" stroke="#222" stroke-width="2"/><path d="M76 130 C111 124 151 124 187 130 L178 162 L176 208 L90 208 L88 162Z" fill="#3a3a3a"/><path d="M76 130 C111 124 151 124 187 130 L178 162 L176 208 L90 208 L88 162Z" fill="#000" filter="url(#tex64)" opacity="0.165"/></g><text x="2.3255813953488373" y="9.5" font-size="7.8" fill="#e8e8e8" text-anchor="start" font-family="Liberation Sans" font-weight="bold" transform="scale(0.86,1)" >Ser: 6</text><text x="2.3255813953488373" y="18.3" font-size="7.8" fill="#e8e8e8" text-anchor="start" font-family="Liberation Sans" font-weight="bold" transform="scale(0.86,1)" >SAG T2 FLAIR FS 3D 0.9 ISO_MPR_cor</text><text x="2.3255813953488373" y="27.1" font-size="7.8" fill="#e8e8e8" text-anchor="start" font-family="Liberation Sans" font-weight="bold" transform="scale(0.86,1)" >MR</text><text x="2.3255813953488373" y="35.900000000000006" font-size="7.8" fill="#e8e8e8" text-anchor="start" font-family="Liberation Sans" font-weight="bold" transform="scale(0.86,1)" >12/20</text><text x="300.0" y="9.5" font-size="7.8" fill="#e8e8e8" text-anchor="end" font-family="Liberation Sans" font-weight="bold" transform="scale(0.86,1)" >Zoom: 65 %</text><text x="2.3255813953488373" y="162" font-size="7.8" fill="#e8e8e8" text-anchor="start" font-family="Liberation Sans" font-weight="bold" transform="scale(0.86,1)" >L: 229</text><text x="2.3255813953488373" y="171" font-size="7.8" fill="#e8e8e8" text-anchor="start" font-family="Liberation Sans" font-weight="bold" transform="scale(0.86,1)" >W: 513</text><text x="2.3255813953488373" y="186.5" font-size="7.8" fill="#e8e8e8" text-anchor="start" font-family="Liberation Sans" font-weight="bold" transform="scale(0.86,1)" >499x499 px</text><text x="2.3255813953488373" y="195.4" font-size="7.8" fill="#e8e8e8" text-anchor="start" font-family="Liberation Sans" font-weight="bold" transform="scale(0.86,1)" >0.461x0.461 mm/px</text><text x="2.3255813953488373" y="204.3" font-size="7.8" fill="#e8e8e8" text-anchor="start" font-family="Liberation Sans" font-weight="bold" transform="scale(0.86,1)" >Thk: 5.000 mm</text><text x="284.8837209302326" y="180" font-size="7.2" fill="#e8e8e8" text-anchor="middle" font-family="Liberation Sans" font-weight="bold" transform="scale(0.86,1)" >H</text><text x="274.4186046511628" y="189" font-size="7.2" fill="#e8e8e8" text-anchor="middle" font-family="Liberation Sans" font-weight="bold" transform="scale(0.86,1)" >R</text><text x="295.34883720930236" y="189" font-size="7.2" fill="#e8e8e8" text-anchor="middle" font-family="Liberation Sans" font-weight="bold" transform="scale(0.86,1)" >L</text><text x="284.8837209302326" y="198" font-size="7.2" fill="#e8e8e8" text-anchor="middle" font-family="Liberation Sans" font-weight="bold" transform="scale(0.86,1)" >F</text></g><rect x="262" y="0" width="9" height="208" fill="#7e858e"/><rect x="262" y="1" width="9" height="12" fill="#9aa0a8"/><rect x="262" y="195" width="9" height="12" fill="#9aa0a8"/><path d="M264 9 L266.5 5 L269 9Z" fill="#eee"/><path d="M264 199 L266.5 203 L269 199Z" fill="#eee"/></g><g transform="translate(543.5,208)"><clipPath id="t21"><rect width="262" height="208"/></clipPath><g clip-path="url(#t21)"><g filter="url(#softt)"><ellipse cx="132" cy="108.5" rx="70" ry="91.5" fill="#3a3a3a" stroke="#6a6a6a" stroke-width="2.6"/><ellipse cx="132" cy="108.5" rx="64" ry="85.5" fill="#111"/><path d="M72 111.5 a60 79.5 0 1 0 120 0 a60 79.5 0 1 0 -120 0" fill="#a4a4a4"/><path d="M72 111.5 a60 79.5 0 1 0 120 0 a60 79.5 0 1 0 -120 0" fill="#000" filter="url(#tex71)" opacity="0.105"/><path d="M72 111.5 a60 79.5 0 1 0 120 0 a60 79.5 0 1 0 -120 0" fill="url(#glow)"/><ellipse cx="132" cy="33.0" rx="21.0" ry="11.895" fill="#0e0e0e"/><path d="M119 80.5 L132 96.5 L145 80.5 L137 104.5 L127 104.5Z" fill="#2a2a2a"/><path d="M102 134.5 Q106 154.5 114 148.5 M162 134.5 Q158 154.5 150 148.5" stroke="#242424" stroke-width="7" fill="none"/><path d="M132 104.5 L132 186.0" stroke="#000" stroke-opacity="0.45" stroke-width="2"/></g><text x="2.3255813953488373" y="9.5" font-size="7.8" fill="#e8e8e8" text-anchor="start" font-family="Liberation Sans" font-weight="bold" transform="scale(0.86,1)" >Ser: 7</text><text x="2.3255813953488373" y="18.3" font-size="7.8" fill="#e8e8e8" text-anchor="start" font-family="Liberation Sans" font-weight="bold" transform="scale(0.86,1)" >SAG T2 FLAIR FS 3D 0.9 ISO_MPR_tra</text><text x="2.3255813953488373" y="27.1" font-size="7.8" fill="#e8e8e8" text-anchor="start" font-family="Liberation Sans" font-weight="bold" transform="scale(0.86,1)" >MR</text><text x="2.3255813953488373" y="35.900000000000006" font-size="7.8" fill="#e8e8e8" text-anchor="start" font-family="Liberation Sans" font-weight="bold" transform="scale(0.86,1)" >11/20</text><text x="300.0" y="9.5" font-size="7.8" fill="#e8e8e8" text-anchor="end" font-family="Liberation Sans" font-weight="bold" transform="scale(0.86,1)" >Zoom: 65 %</text><text x="2.3255813953488373" y="162" font-size="7.8" fill="#e8e8e8" text-anchor="start" font-family="Liberation Sans" font-weight="bold" transform="scale(0.86,1)" >L: 257</text><text x="2.3255813953488373" y="171" font-size="7.8" fill="#e8e8e8" text-anchor="start" font-family="Liberation Sans" font-weight="bold" transform="scale(0.86,1)" >W: 553</text><text x="2.3255813953488373" y="186.5" font-size="7.8" fill="#e8e8e8" text-anchor="start" font-family="Liberation Sans" font-weight="bold" transform="scale(0.86,1)" >499x499 px</text><text x="2.3255813953488373" y="195.4" font-size="7.8" fill="#e8e8e8" text-anchor="start" font-family="Liberation Sans" font-weight="bold" transform="scale(0.86,1)" >0.461x0.461 mm/px</text><text x="2.3255813953488373" y="204.3" font-size="7.8" fill="#e8e8e8" text-anchor="start" font-family="Liberation Sans" font-weight="bold" transform="scale(0.86,1)" >Thk: 5.000 mm</text><text x="284.8837209302326" y="180" font-size="7.2" fill="#e8e8e8" text-anchor="middle" font-family="Liberation Sans" font-weight="bold" transform="scale(0.86,1)" >A</text><text x="274.4186046511628" y="189" font-size="7.2" fill="#e8e8e8" text-anchor="middle" font-family="Liberation Sans" font-weight="bold" transform="scale(0.86,1)" >R</text><text x="295.34883720930236" y="189" font-size="7.2" fill="#e8e8e8" text-anchor="middle" font-family="Liberation Sans" font-weight="bold" transform="scale(0.86,1)" >L</text><text x="284.8837209302326" y="198" font-size="7.2" fill="#e8e8e8" text-anchor="middle" font-family="Liberation Sans" font-weight="bold" transform="scale(0.86,1)" >P</text></g><rect x="262" y="0" width="9" height="208" fill="#7e858e"/><rect x="262" y="1" width="9" height="12" fill="#9aa0a8"/><rect x="262" y="195" width="9" height="12" fill="#9aa0a8"/><path d="M264 9 L266.5 5 L269 9Z" fill="#eee"/><path d="M264 199 L266.5 203 L269 199Z" fill="#eee"/></g><g transform="translate(816,208)"><clipPath id="t31"><rect width="262" height="208"/></clipPath><g clip-path="url(#t31)"><g filter="url(#softt)"><g transform="translate(-6,-8) scale(1.15) rotate(6 120 100)"><path d="M163 208 C165 185 172 165 185 148 C196 132 202 112 201 92 C200 62 182 38 150 28 C118 20 80 30 58 54 C46 68 41 80 41 90 C41 98 38 104 33 112 C28 120 24 127 27 133 C30 140 33 146 31 156 C28 170 30 190 31 208 Z" fill="#444444"/><path d="M163 208 C165 185 172 165 185 148 C196 132 202 112 201 92 C200 62 182 38 150 28 C118 20 80 30 58 54 C46 68 41 80 41 90 C41 98 38 104 33 112 C28 120 24 127 27 133 C30 140 33 146 31 156 C28 170 30 190 31 208 Z" fill="#000" filter="url(#tex81)" opacity="0.135"/><path d="M167 208 C169 185 176 165 189 148 C200 132 206 112 205 92 C204 60 185 34 150 24 C116 15 76 27 54 52 C43 65 38 78 38 90" fill="none" stroke="#d4d4d4" stroke-width="3"/><path d="M160 208 C162 188 168 170 180 154 C188 144 192 136 194 128" fill="none" stroke="#e6e6e6" stroke-width="3.5"/><path d="M176 150 C189 132 196 112 195 92 C194 64 178 44 150 35 C120 27 86 36 66 58 C56 70 50 80 50 92" fill="none" stroke="#0c0c0c" stroke-width="6"/><path d="M59 84 C58 60 80 42 112 38 C146 34 176 44 188 70 C196 90 192 118 182 132 C174 144 160 148 148 144 C140 136 136 122 124 110 C112 102 96 104 78 102 C64 100 59 94 59 84 Z" fill="#a4a4a4"/><path d="M59 84 C58 60 80 42 112 38 C146 34 176 44 188 70 C196 90 192 118 182 132 C174 144 160 148 148 144 C140 136 136 122 124 110 C112 102 96 104 78 102 C64 100 59 94 59 84 Z" fill="#000" filter="url(#tex82)" opacity="0.096"/><path d="M59 84 C58 60 80 42 112 38 C146 34 176 44 188 70 C196 90 192 118 182 132 C174 144 160 148 148 144 C140 136 136 122 124 110 C112 102 96 104 78 102 C64 100 59 94 59 84 Z" fill="url(#glow)"/><path d="M90 84 C96 66 124 60 142 68 C152 72 156 80 152 88" fill="none" stroke="#e2e2e2" stroke-width="5"/><path d="M98 86 C108 74 128 72 140 80 C136 92 112 96 98 86Z" fill="#3a3a3a"/><path d="M48 104 C70 98 100 104 112 112 C110 124 96 132 80 130 C64 128 52 122 44 114Z" fill="#121212"/><path d="M40 140 C60 138 80 142 92 148 C88 156 70 158 44 152Z" fill="#1a1a1a"/><path d="M112 100 C128 108 138 124 138 150 L140 208 L124 208 C124 170 122 140 108 116Z" fill="#a6a6a6"/><path d="M106 150 L112 208 M96 148 L100 208" stroke="#222" stroke-width="4"/><path d="M147 160 C160 170 150 190 152 208" stroke="#cfcfcf" stroke-width="2.5" fill="none"/><ellipse cx="70" cy="178" rx="36" ry="32" fill="#585858"/><path d="M34 178 a36 32 0 1 0 72 0 a36 32 0 1 0 -72 0" fill="#000" filter="url(#tex83)" opacity="0.090"/></g></g><text x="2.3255813953488373" y="9.5" font-size="7.8" fill="#e8e8e8" text-anchor="start" font-family="Liberation Sans" font-weight="bold" transform="scale(0.86,1)" >Ser: 8</text><text x="2.3255813953488373" y="18.3" font-size="7.8" fill="#e8e8e8" text-anchor="start" font-family="Liberation Sans" font-weight="bold" transform="scale(0.86,1)" >SAG T2 FLAIR FS 3D 0.9 ISO_MPR_SAG</text><text x="2.3255813953488373" y="27.1" font-size="7.8" fill="#e8e8e8" text-anchor="start" font-family="Liberation Sans" font-weight="bold" transform="scale(0.86,1)" >MR</text><text x="2.3255813953488373" y="35.900000000000006" font-size="7.8" fill="#e8e8e8" text-anchor="start" font-family="Liberation Sans" font-weight="bold" transform="scale(0.86,1)" >11/20</text><text x="300.0" y="9.5" font-size="7.8" fill="#e8e8e8" text-anchor="end" font-family="Liberation Sans" font-weight="bold" transform="scale(0.86,1)" >Zoom: 62 %</text><text x="2.3255813953488373" y="162" font-size="7.8" fill="#e8e8e8" text-anchor="start" font-family="Liberation Sans" font-weight="bold" transform="scale(0.86,1)" >L: 218</text><text x="2.3255813953488373" y="171" font-size="7.8" fill="#e8e8e8" text-anchor="start" font-family="Liberation Sans" font-weight="bold" transform="scale(0.86,1)" >W: 496</text><text x="2.3255813953488373" y="186.5" font-size="7.8" fill="#e8e8e8" text-anchor="start" font-family="Liberation Sans" font-weight="bold" transform="scale(0.86,1)" >521x521 px</text><text x="2.3255813953488373" y="195.4" font-size="7.8" fill="#e8e8e8" text-anchor="start" font-family="Liberation Sans" font-weight="bold" transform="scale(0.86,1)" >0.461x0.461 mm/px</text><text x="2.3255813953488373" y="204.3" font-size="7.8" fill="#e8e8e8" text-anchor="start" font-family="Liberation Sans" font-weight="bold" transform="scale(0.86,1)" >Thk: 5.000 mm</text><text x="284.8837209302326" y="180" font-size="7.2" fill="#e8e8e8" text-anchor="middle" font-family="Liberation Sans" font-weight="bold" transform="scale(0.86,1)" >H</text><text x="274.4186046511628" y="189" font-size="7.2" fill="#e8e8e8" text-anchor="middle" font-family="Liberation Sans" font-weight="bold" transform="scale(0.86,1)" >A</text><text x="295.34883720930236" y="189" font-size="7.2" fill="#e8e8e8" text-anchor="middle" font-family="Liberation Sans" font-weight="bold" transform="scale(0.86,1)" >P</text><text x="284.8837209302326" y="198" font-size="7.2" fill="#e8e8e8" text-anchor="middle" font-family="Liberation Sans" font-weight="bold" transform="scale(0.86,1)" >F</text></g><rect x="262" y="0" width="9" height="208" fill="#7e858e"/><rect x="262" y="1" width="9" height="12" fill="#9aa0a8"/><rect x="262" y="195" width="9" height="12" fill="#9aa0a8"/><path d="M264 9 L266.5 5 L269 9Z" fill="#eee"/><path d="M264 199 L266.5 203 L269 199Z" fill="#eee"/></g><g transform="translate(0,416)"><clipPath id="t02"><rect width="262" height="208"/></clipPath><g clip-path="url(#t02)"><g filter="url(#softt)"><ellipse cx="130.5" cy="107" rx="73.5" ry="97" fill="#3a3a3a" stroke="#5a5a5a" stroke-width="2.6"/><ellipse cx="130.5" cy="107" rx="67.5" ry="91" fill="#111"/><path d="M67.0 110 a63.5 85 0 1 0 127.0 0 a63.5 85 0 1 0 -127.0 0" fill="#b6b6b6"/><path d="M67.0 110 a63.5 85 0 1 0 127.0 0 a63.5 85 0 1 0 -127.0 0" fill="#000" filter="url(#tex91)" opacity="0.090"/><path d="M67.0 110 a63.5 85 0 1 0 127.0 0 a63.5 85 0 1 0 -127.0 0" fill="url(#glow)"/><ellipse cx="130.5" cy="26" rx="22.05" ry="12.610000000000001" fill="#0e0e0e"/><path d="M117.5 79 L130.5 95 L143.5 79 L135.5 103 L125.5 103Z" fill="#2a2a2a"/><path d="M100.5 133 Q104.5 153 112.5 147 M160.5 133 Q156.5 153 148.5 147" stroke="#242424" stroke-width="7" fill="none"/><path d="M130.5 103 L130.5 190" stroke="#000" stroke-opacity="0.45" stroke-width="2"/><ellipse cx="130.5" cy="115" rx="30.869999999999997" ry="48.5" fill="#fff" fill-opacity="0.16"/></g><text x="2.3255813953488373" y="9.5" font-size="7.8" fill="#e8e8e8" text-anchor="start" font-family="Liberation Sans" font-weight="bold" transform="scale(0.86,1)" >Ser: 9</text><text x="2.3255813953488373" y="18.3" font-size="7.8" fill="#e8e8e8" text-anchor="start" font-family="Liberation Sans" font-weight="bold" transform="scale(0.86,1)" >AX T2 EG HR</text><text x="2.3255813953488373" y="27.1" font-size="7.8" fill="#e8e8e8" text-anchor="start" font-family="Liberation Sans" font-weight="bold" transform="scale(0.86,1)" >MR</text><text x="2.3255813953488373" y="35.900000000000006" font-size="7.8" fill="#e8e8e8" text-anchor="start" font-family="Liberation Sans" font-weight="bold" transform="scale(0.86,1)" >21/40</text><text x="300.0" y="9.5" font-size="7.8" fill="#e8e8e8" text-anchor="end" font-family="Liberation Sans" font-weight="bold" transform="scale(0.86,1)" >Zoom: 101 %</text><text x="2.3255813953488373" y="162" font-size="7.8" fill="#e8e8e8" text-anchor="start" font-family="Liberation Sans" font-weight="bold" transform="scale(0.86,1)" >L: 761</text><text x="2.3255813953488373" y="171" font-size="7.8" fill="#e8e8e8" text-anchor="start" font-family="Liberation Sans" font-weight="bold" transform="scale(0.86,1)" >W: 1542</text><text x="2.3255813953488373" y="186.5" font-size="7.8" fill="#e8e8e8" text-anchor="start" font-family="Liberation Sans" font-weight="bold" transform="scale(0.86,1)" >320x320 px</text><text x="2.3255813953488373" y="195.4" font-size="7.8" fill="#e8e8e8" text-anchor="start" font-family="Liberation Sans" font-weight="bold" transform="scale(0.86,1)" >0.688x0.688 mm/px</text><text x="2.3255813953488373" y="204.3" font-size="7.8" fill="#e8e8e8" text-anchor="start" font-family="Liberation Sans" font-weight="bold" transform="scale(0.86,1)" >Thk: 3.000 mm</text><text x="284.8837209302326" y="180" font-size="7.2" fill="#e8e8e8" text-anchor="middle" font-family="Liberation Sans" font-weight="bold" transform="scale(0.86,1)" >A</text><text x="274.4186046511628" y="189" font-size="7.2" fill="#e8e8e8" text-anchor="middle" font-family="Liberation Sans" font-weight="bold" transform="scale(0.86,1)" >R</text><text x="295.34883720930236" y="189" font-size="7.2" fill="#e8e8e8" text-anchor="middle" font-family="Liberation Sans" font-weight="bold" transform="scale(0.86,1)" >L</text><text x="284.8837209302326" y="198" font-size="7.2" fill="#e8e8e8" text-anchor="middle" font-family="Liberation Sans" font-weight="bold" transform="scale(0.86,1)" >P</text></g><rect x="262" y="0" width="9" height="208" fill="#7e858e"/><rect x="262" y="1" width="9" height="12" fill="#9aa0a8"/><rect x="262" y="195" width="9" height="12" fill="#9aa0a8"/><path d="M264 9 L266.5 5 L269 9Z" fill="#eee"/><path d="M264 199 L266.5 203 L269 199Z" fill="#eee"/></g><g transform="translate(271,416)"><clipPath id="t12"><rect width="262" height="208"/></clipPath><g clip-path="url(#t12)"><g filter="url(#softt)"><ellipse cx="130.5" cy="108.5" rx="73.5" ry="93.5" fill="#3a3a3a" stroke="#d8d8d8" stroke-width="2.6"/><ellipse cx="130.5" cy="108.5" rx="67.5" ry="87.5" fill="#111"/><path d="M67.0 111.5 a63.5 81.5 0 1 0 127.0 0 a63.5 81.5 0 1 0 -127.0 0" fill="#acacac"/><path d="M67.0 111.5 a63.5 81.5 0 1 0 127.0 0 a63.5 81.5 0 1 0 -127.0 0" fill="#000" filter="url(#tex101)" opacity="0.096"/><path d="M67.0 111.5 a63.5 81.5 0 1 0 127.0 0 a63.5 81.5 0 1 0 -127.0 0" fill="url(#glow)"/><ellipse cx="130.5" cy="31.0" rx="22.05" ry="12.155000000000001" fill="#0e0e0e"/><path d="M117.5 80.5 L130.5 96.5 L143.5 80.5 L135.5 104.5 L125.5 104.5Z" fill="#2a2a2a"/><path d="M100.5 134.5 Q104.5 154.5 112.5 148.5 M160.5 134.5 Q156.5 154.5 148.5 148.5" stroke="#242424" stroke-width="7" fill="none"/><path d="M130.5 104.5 L130.5 188.0" stroke="#000" stroke-opacity="0.45" stroke-width="2"/></g><text x="2.3255813953488373" y="9.5" font-size="7.8" fill="#e8e8e8" text-anchor="start" font-family="Liberation Sans" font-weight="bold" transform="scale(0.86,1)" >Ser: 10</text><text x="2.3255813953488373" y="18.3" font-size="7.8" fill="#e8e8e8" text-anchor="start" font-family="Liberation Sans" font-weight="bold" transform="scale(0.86,1)" >AX T1 MPRAGE FS GADO</text><text x="2.3255813953488373" y="27.1" font-size="7.8" fill="#e8e8e8" text-anchor="start" font-family="Liberation Sans" font-weight="bold" transform="scale(0.86,1)" >MR</text><text x="2.3255813953488373" y="35.900000000000006" font-size="7.8" fill="#e8e8e8" text-anchor="start" font-family="Liberation Sans" font-weight="bold" transform="scale(0.86,1)" >97/192</text><text x="300.0" y="9.5" font-size="7.8" fill="#e8e8e8" text-anchor="end" font-family="Liberation Sans" font-weight="bold" transform="scale(0.86,1)" >Zoom: 63 %</text><text x="2.3255813953488373" y="162" font-size="7.8" fill="#e8e8e8" text-anchor="start" font-family="Liberation Sans" font-weight="bold" transform="scale(0.86,1)" >L: 630</text><text x="2.3255813953488373" y="171" font-size="7.8" fill="#e8e8e8" text-anchor="start" font-family="Liberation Sans" font-weight="bold" transform="scale(0.86,1)" >W: 1273</text><text x="2.3255813953488373" y="186.5" font-size="7.8" fill="#e8e8e8" text-anchor="start" font-family="Liberation Sans" font-weight="bold" transform="scale(0.86,1)" >512x512 px</text><text x="2.3255813953488373" y="195.4" font-size="7.8" fill="#e8e8e8" text-anchor="start" font-family="Liberation Sans" font-weight="bold" transform="scale(0.86,1)" >0.449x0.449 mm/px</text><text x="2.3255813953488373" y="204.3" font-size="7.8" fill="#e8e8e8" text-anchor="start" font-family="Liberation Sans" font-weight="bold" transform="scale(0.86,1)" >Thk: 0.900 mm</text><text x="284.8837209302326" y="180" font-size="7.2" fill="#e8e8e8" text-anchor="middle" font-family="Liberation Sans" font-weight="bold" transform="scale(0.86,1)" >A</text><text x="274.4186046511628" y="189" font-size="7.2" fill="#e8e8e8" text-anchor="middle" font-family="Liberation Sans" font-weight="bold" transform="scale(0.86,1)" >R</text><text x="295.34883720930236" y="189" font-size="7.2" fill="#e8e8e8" text-anchor="middle" font-family="Liberation Sans" font-weight="bold" transform="scale(0.86,1)" >L</text><text x="284.8837209302326" y="198" font-size="7.2" fill="#e8e8e8" text-anchor="middle" font-family="Liberation Sans" font-weight="bold" transform="scale(0.86,1)" >P</text></g><rect x="262" y="0" width="9" height="208" fill="#7e858e"/><rect x="262" y="1" width="9" height="12" fill="#9aa0a8"/><rect x="262" y="195" width="9" height="12" fill="#9aa0a8"/><path d="M264 9 L266.5 5 L269 9Z" fill="#eee"/><path d="M264 199 L266.5 203 L269 199Z" fill="#eee"/></g><g transform="translate(543.5,416)"><clipPath id="t22"><rect width="262" height="208"/></clipPath><g clip-path="url(#t22)"><g filter="url(#softt)"><path d="M57 118 C55 60 83.32 15 131 15 C178.68 15 208 60 206 118 C206 132 202 144 196 158 L192 176 L76 176 L72 158 C61 144 57 132 57 118Z" fill="#2c2c2c"/><path d="M57 124 C55 60 83.32 15 131 15 C178.68 15 208 60 206 124" fill="none" stroke="#b4b4b4" stroke-width="2.6"/><path d="M63 118 C62 64 89.28 22 131 22 C172.72 22 201 64 200 118" fill="none" stroke="#0c0c0c" stroke-width="5"/><path d="M67 114 C66 66 92.25999999999999 28 131 28 C169.74 28 197 66 196 114 C194 128 161 132 147 120 C139 112 123 112 115 120 C101 132 69 128 67 114Z" fill="#a2a2a2"/><path d="M67 114 C66 66 92.25999999999999 28 131 28 C169.74 28 197 66 196 114 C194 128 161 132 147 120 C139 112 123 112 115 120 C101 132 69 128 67 114Z" fill="#000" filter="url(#tex111)" opacity="0.120"/><path d="M67 114 C66 66 92.25999999999999 28 131 28 C169.74 28 197 66 196 114 C194 128 161 132 147 120 C139 112 123 112 115 120 C101 132 69 128 67 114Z" fill="url(#glow)"/><path d="M118 61 L131 75 L144 61 L134 93 L128 93Z" fill="#1e1e1e"/><path d="M131 29 L131 59" stroke="#222" stroke-width="2"/><path d="M71 126 C111 120 151 120 192 126 L190 158 L188 176 L80 176 L78 158Z" fill="#2e2e2e"/><path d="M71 126 C111 120 151 120 192 126 L190 158 L188 176 L80 176 L78 158Z" fill="#000" filter="url(#tex114)" opacity="0.165"/><path d="M111 120 Q131 108 151 120 M131 114 L131 148 M131 148 L117 158 M131 148 L145 158" stroke="#eee" stroke-width="2.6" fill="none"/><ellipse cx="103" cy="152" rx="8" ry="6" fill="#e4e4e4"/><ellipse cx="159" cy="150" rx="7" ry="5" fill="#dcdcdc"/></g><text x="2.3255813953488373" y="9.5" font-size="7.8" fill="#e8e8e8" text-anchor="start" font-family="Liberation Sans" font-weight="bold" transform="scale(0.86,1)" >Ser: 11</text><text x="2.3255813953488373" y="18.3" font-size="7.8" fill="#e8e8e8" text-anchor="start" font-family="Liberation Sans" font-weight="bold" transform="scale(0.86,1)" >AX T1 MPRAGE FS GADO_MPR_cor</text><text x="2.3255813953488373" y="27.1" font-size="7.8" fill="#e8e8e8" text-anchor="start" font-family="Liberation Sans" font-weight="bold" transform="scale(0.86,1)" >MR</text><text x="2.3255813953488373" y="35.900000000000006" font-size="7.8" fill="#e8e8e8" text-anchor="start" font-family="Liberation Sans" font-weight="bold" transform="scale(0.86,1)" >11/20</text><text x="300.0" y="9.5" font-size="7.8" fill="#e8e8e8" text-anchor="end" font-family="Liberation Sans" font-weight="bold" transform="scale(0.86,1)" >Zoom: 63 %</text><text x="2.3255813953488373" y="162" font-size="7.8" fill="#e8e8e8" text-anchor="start" font-family="Liberation Sans" font-weight="bold" transform="scale(0.86,1)" >L: 644</text><text x="2.3255813953488373" y="171" font-size="7.8" fill="#e8e8e8" text-anchor="start" font-family="Liberation Sans" font-weight="bold" transform="scale(0.86,1)" >W: 1314</text><text x="2.3255813953488373" y="186.5" font-size="7.8" fill="#e8e8e8" text-anchor="start" font-family="Liberation Sans" font-weight="bold" transform="scale(0.86,1)" >512x512 px</text><text x="2.3255813953488373" y="195.4" font-size="7.8" fill="#e8e8e8" text-anchor="start" font-family="Liberation Sans" font-weight="bold" transform="scale(0.86,1)" >0.449x0.449 mm/px</text><text x="2.3255813953488373" y="204.3" font-size="7.8" fill="#e8e8e8" text-anchor="start" font-family="Liberation Sans" font-weight="bold" transform="scale(0.86,1)" >Thk: 5.000 mm</text><text x="284.8837209302326" y="180" font-size="7.2" fill="#e8e8e8" text-anchor="middle" font-family="Liberation Sans" font-weight="bold" transform="scale(0.86,1)" >H</text><text x="274.4186046511628" y="189" font-size="7.2" fill="#e8e8e8" text-anchor="middle" font-family="Liberation Sans" font-weight="bold" transform="scale(0.86,1)" >R</text><text x="295.34883720930236" y="189" font-size="7.2" fill="#e8e8e8" text-anchor="middle" font-family="Liberation Sans" font-weight="bold" transform="scale(0.86,1)" >L</text><text x="284.8837209302326" y="198" font-size="7.2" fill="#e8e8e8" text-anchor="middle" font-family="Liberation Sans" font-weight="bold" transform="scale(0.86,1)" >F</text></g><rect x="262" y="0" width="9" height="208" fill="#7e858e"/><rect x="262" y="1" width="9" height="12" fill="#9aa0a8"/><rect x="262" y="195" width="9" height="12" fill="#9aa0a8"/><path d="M264 9 L266.5 5 L269 9Z" fill="#eee"/><path d="M264 199 L266.5 203 L269 199Z" fill="#eee"/></g><g transform="translate(816,416)"><clipPath id="t32"><rect width="262" height="208"/></clipPath><g clip-path="url(#t32)"><g filter="url(#softt)"><ellipse cx="129.5" cy="110" rx="72.5" ry="92" fill="#3a3a3a" stroke="#d0d0d0" stroke-width="2.6"/><ellipse cx="129.5" cy="110" rx="66.5" ry="86" fill="#111"/><path d="M67.0 113 a62.5 80 0 1 0 125.0 0 a62.5 80 0 1 0 -125.0 0" fill="#a6a6a6"/><path d="M67.0 113 a62.5 80 0 1 0 125.0 0 a62.5 80 0 1 0 -125.0 0" fill="#000" filter="url(#tex121)" opacity="0.096"/><path d="M67.0 113 a62.5 80 0 1 0 125.0 0 a62.5 80 0 1 0 -125.0 0" fill="url(#glow)"/><ellipse cx="129.5" cy="34" rx="21.75" ry="11.96" fill="#0e0e0e"/><path d="M116.5 82 L129.5 98 L142.5 82 L134.5 106 L124.5 106Z" fill="#2a2a2a"/><path d="M99.5 136 Q103.5 156 111.5 150 M159.5 136 Q155.5 156 147.5 150" stroke="#242424" stroke-width="7" fill="none"/><path d="M129.5 106 L129.5 188" stroke="#000" stroke-opacity="0.45" stroke-width="2"/></g><text x="2.3255813953488373" y="9.5" font-size="7.8" fill="#e8e8e8" text-anchor="start" font-family="Liberation Sans" font-weight="bold" transform="scale(0.86,1)" >Ser: 12</text><text x="2.3255813953488373" y="18.3" font-size="7.8" fill="#e8e8e8" text-anchor="start" font-family="Liberation Sans" font-weight="bold" transform="scale(0.86,1)" >AX T1 MPRAGE FS GADO_MPR_tra</text><text x="2.3255813953488373" y="27.1" font-size="7.8" fill="#e8e8e8" text-anchor="start" font-family="Liberation Sans" font-weight="bold" transform="scale(0.86,1)" >MR</text><text x="2.3255813953488373" y="35.900000000000006" font-size="7.8" fill="#e8e8e8" text-anchor="start" font-family="Liberation Sans" font-weight="bold" transform="scale(0.86,1)" >11/20</text><text x="300.0" y="9.5" font-size="7.8" fill="#e8e8e8" text-anchor="end" font-family="Liberation Sans" font-weight="bold" transform="scale(0.86,1)" >Zoom: 63 %</text><text x="2.3255813953488373" y="162" font-size="7.8" fill="#e8e8e8" text-anchor="start" font-family="Liberation Sans" font-weight="bold" transform="scale(0.86,1)" >L: 677</text><text x="2.3255813953488373" y="171" font-size="7.8" fill="#e8e8e8" text-anchor="start" font-family="Liberation Sans" font-weight="bold" transform="scale(0.86,1)" >W: 1313</text><text x="2.3255813953488373" y="186.5" font-size="7.8" fill="#e8e8e8" text-anchor="start" font-family="Liberation Sans" font-weight="bold" transform="scale(0.86,1)" >512x512 px</text><text x="2.3255813953488373" y="195.4" font-size="7.8" fill="#e8e8e8" text-anchor="start" font-family="Liberation Sans" font-weight="bold" transform="scale(0.86,1)" >0.449x0.449 mm/px</text><text x="2.3255813953488373" y="204.3" font-size="7.8" fill="#e8e8e8" text-anchor="start" font-family="Liberation Sans" font-weight="bold" transform="scale(0.86,1)" >Thk: 5.000 mm</text><text x="284.8837209302326" y="180" font-size="7.2" fill="#e8e8e8" text-anchor="middle" font-family="Liberation Sans" font-weight="bold" transform="scale(0.86,1)" >A</text><text x="274.4186046511628" y="189" font-size="7.2" fill="#e8e8e8" text-anchor="middle" font-family="Liberation Sans" font-weight="bold" transform="scale(0.86,1)" >R</text><text x="295.34883720930236" y="189" font-size="7.2" fill="#e8e8e8" text-anchor="middle" font-family="Liberation Sans" font-weight="bold" transform="scale(0.86,1)" >L</text><text x="284.8837209302326" y="198" font-size="7.2" fill="#e8e8e8" text-anchor="middle" font-family="Liberation Sans" font-weight="bold" transform="scale(0.86,1)" >P</text></g><rect x="262" y="0" width="9" height="208" fill="#7e858e"/><rect x="262" y="1" width="9" height="12" fill="#9aa0a8"/><rect x="262" y="195" width="9" height="12" fill="#9aa0a8"/><path d="M264 9 L266.5 5 L269 9Z" fill="#eee"/><path d="M264 199 L266.5 203 L269 199Z" fill="#eee"/></g><rect x="0" y="207.5" width="1087" height="1.5" fill="#6a6a6a"/><rect x="0" y="415.5" width="1087" height="1.5" fill="#6a6a6a"/><rect x="0" y="0" width="1087" height="1" fill="#555"/><rect x="271" y="208.5" width="262" height="207.5" fill="none" stroke="#888" stroke-width="1.2"/></symbol></defs></svg>
<div class="b" style="left:17px;top:15px;width:468px;height:100px;background:#f7f7f7"></div>
<svg class="b" style="left:30px;top:34px" width="60" height="60" viewBox="30 34 60 60">
<circle cx="60" cy="63.8" r="23" fill="none" stroke="#111" stroke-width="2.6"/>
<circle cx="59.6" cy="52.8" r="4.7" fill="none" stroke="#111" stroke-width="2.4"/>
<path d="M48.8 78.3 C49.5 67 54 62.6 60 62.6 C66 62.6 70.5 67 71.3 78.3" fill="none" stroke="#111" stroke-width="2.4" stroke-linecap="round"/>
</svg>
<div class="t" style="left:109.79px;top:38.80px;font-size:22.94px;line-height:26px;font-weight:bold;color:#464646;transform:scaleX(0.9456);">Philip J</div>
<div class="t" style="left:109.86px;top:62.80px;font-size:22.94px;line-height:26px;font-weight:bold;color:#464646;transform:scaleX(0.8982);">Fry</div>
<div class="t" style="left:405.70px;top:26.00px;font-size:21.32px;line-height:24px;font-weight:bold;color:#464646;transform:scaleX(0.9441);">48 ans</div>
<div class="t" style="left:319.44px;top:52.00px;font-size:21.32px;line-height:24px;font-weight:normal;color:#464646;transform:scaleX(0.9154);-webkit-text-stroke:0.55px #464646;">Né le 09/08/1974</div>
<div class="t" style="left:308.57px;top:76.50px;font-size:21.32px;line-height:24px;font-weight:normal;color:#464646;transform:scaleX(0.8969);-webkit-text-stroke:0.55px #464646;">174086760648534</div>
<div class="b" style="left:510px;top:17px;width:279px;height:45px;background:#ececec"></div>
<svg class="b" style="left:528px;top:33.5px" width="10" height="14" viewBox="0 0 10 14"><path d="M0.5 0.5 L9.5 7 L0.5 13.5Z" fill="#3a47a0"/></svg>
<div class="t" style="left:578.36px;top:29.00px;font-size:19.85px;line-height:22px;font-weight:bold;color:#111a6e;transform:scaleX(0.8837);">PRESCRIPTIONS</div>
<div class="b" style="left:800px;top:17px;width:280px;height:45px;background:#ececec"></div>
<svg class="b" style="left:816px;top:33.5px" width="10" height="14" viewBox="0 0 10 14"><path d="M0.5 0.5 L9.5 7 L0.5 13.5Z" fill="#3a47a0"/></svg>
<div class="t" style="left:865.55px;top:29.00px;font-size:19.85px;line-height:22px;font-weight:bold;color:#111a6e;transform:scaleX(0.9092);">ADMINISTRATIFS</div>
<div class="b" style="left:1093px;top:17px;width:279px;height:45px;background:#ececec"></div>
<svg class="b" style="left:1104px;top:33.5px" width="10" height="14" viewBox="0 0 10 14"><path d="M0.5 0.5 L9.5 7 L0.5 13.5Z" fill="#3a47a0"/></svg>
<div class="t" style="left:1121.87px;top:29.00px;font-size:19.85px;line-height:22px;font-weight:bold;color:#111a6e;transform:scaleX(0.8733);">PARAMÈTRES CLINIQUES</div>
<div class="b" style="left:1379px;top:17px;width:279px;height:45px;background:#ececec"></div>
<svg class="b" style="left:1394px;top:33.5px" width="10" height="14" viewBox="0 0 10 14"><path d="M0.5 0.5 L9.5 7 L0.5 13.5Z" fill="#3a47a0"/></svg>
<div class="t" style="left:1410.44px;top:29.00px;font-size:19.85px;line-height:22px;font-weight:bold;color:#111a6e;transform:scaleX(0.9006);">INFORMATIONS PATIENT</div>
<div class="b" style="left:1668px;top:17px;width:279px;height:45px;background:#ececec"></div>
<svg class="b" style="left:1683px;top:33.5px" width="10" height="14" viewBox="0 0 10 14"><path d="M0.5 0.5 L9.5 7 L0.5 13.5Z" fill="#3a47a0"/></svg>
<div class="t" style="left:1787.41px;top:29.00px;font-size:19.85px;line-height:22px;font-weight:bold;color:#111a6e;transform:scaleX(0.9497);">VSM</div>
<div class="b" style="left:1959px;top:17px;width:278px;height:45px;background:#ececec"></div>
<svg class="b" style="left:1973px;top:33.5px" width="10" height="14" viewBox="0 0 10 14"><path d="M0.5 0.5 L9.5 7 L0.5 13.5Z" fill="#3a47a0"/></svg>
<div class="t" style="left:2088.82px;top:29.00px;font-size:19.85px;line-height:22px;font-weight:bold;color:#111a6e;transform:scaleX(0.9149);">....</div>
<div class="b" style="left:2247px;top:17px;width:279px;height:45px;background:#dcd1dc"></div>
<div class="t" style="left:2309.84px;top:29.00px;font-size:19.85px;line-height:22px;font-weight:bold;color:#111a6e;transform:scaleX(0.8952);">MENU PRINCIPAL</div>
<svg class="b" style="left:2470px;top:22px" width="50" height="34" viewBox="2470 22 50 34">
<path d="M2500 34.2 A10.3 10.3 0 1 0 2500 44.4" fill="none" stroke="#0e1060" stroke-width="2" stroke-linecap="round"/>
<path d="M2491.6 39.3 H2510.2 M2507 35.6 L2510.8 39.3 L2507 43" fill="none" stroke="#0e1060" stroke-width="2" stroke-linecap="round" stroke-linejoin="round"/>
</svg>
<div class="t" style="left:16.37px;top:130.10px;font-size:31.62px;line-height:36px;font-weight:bold;color:#464646;transform:scaleX(0.8908);">Biologie</div>
<svg class="b" style="left:446px;top:135px" width="38" height="32" viewBox="446 135 38 32">
<rect x="451.3" y="139.7" width="27.1" height="21.8" rx="2.2" fill="none" stroke="#000" stroke-width="2.6"/>
<path d="M456.6 150.9 V145.6 H462" fill="none" stroke="#000" stroke-width="2.7"/>
<path d="M467.4 156.4 H472.7 V150.9" fill="none" stroke="#000" stroke-width="2.7"/>
</svg>
<div class="b" style="left:17px;top:177px;width:445px;height:1223px;overflow:hidden;background:#fff">
<div class="b" style="left:0;top:0.00px;width:445px;height:30.21px;background:#e4e4e4"></div>
<div class="t" style="left:7.60px;top:4.65px;font-size:17.90px;line-height:20px;font-weight:bold;color:#333;">HEMATOLOGIE NFS</div>
<div class="t" style="left:352.28px;top:4.65px;font-size:17.90px;line-height:20px;font-weight:normal;color:#8a8a8a;">0/08/2018</div>
<div class="b" style="left:352px;top:30.21px;width:87.5px;height:30.21px;background:#ebebeb"></div>
<div class="t" style="left:28.30px;top:35.71px;font-size:17.90px;line-height:20px;font-weight:normal;color:#484848;">Hématies (10*6/mL)</div>
<div class="b" style="left:352px;top:60.42px;width:87.5px;height:30.21px;background:#ebebeb"></div>
<div class="t" style="left:28.30px;top:65.92px;font-size:17.90px;line-height:20px;font-weight:normal;color:#484848;">Hématocrite (%)</div>
<div class="b" style="left:352px;top:90.63px;width:87.5px;height:30.21px;background:#ebebeb"></div>
<div class="t" style="left:28.30px;top:96.13px;font-size:17.90px;line-height:20px;font-weight:normal;color:#484848;">Hémoglobine (g/dL)</div>
<div class="b" style="left:352px;top:120.84px;width:87.5px;height:30.21px;background:#ebebeb"></div>
<div class="t" style="left:28.30px;top:126.34px;font-size:17.90px;line-height:20px;font-weight:normal;color:#484848;">VGM (fL)</div>
<div class="b" style="left:352px;top:151.05px;width:87.5px;height:30.21px;background:#ebebeb"></div>
<div class="t" style="left:28.30px;top:156.55px;font-size:17.90px;line-height:20px;font-weight:normal;color:#484848;">TCMH (pg/hématie)</div>
<div class="b" style="left:352px;top:181.26px;width:87.5px;height:30.21px;background:#ebebeb"></div>
<div class="t" style="left:28.30px;top:186.76px;font-size:17.90px;line-height:20px;font-weight:normal;color:#484848;">CCMH (g/dL)</div>
<div class="b" style="left:352px;top:211.47px;width:87.5px;height:30.21px;background:#ebebeb"></div>
<div class="t" style="left:28.30px;top:216.97px;font-size:17.90px;line-height:20px;font-weight:normal;color:#484848;">IDR (%)</div>
<div class="b" style="left:352px;top:241.68px;width:87.5px;height:30.21px;background:#ebebeb"></div>
<div class="t" style="left:28.30px;top:247.18px;font-size:17.90px;line-height:20px;font-weight:normal;color:#484848;">Leucocytes (10*3/mL)</div>
<div class="b" style="left:352px;top:271.89px;width:87.5px;height:30.21px;background:#ebebeb"></div>
<div class="t" style="left:28.30px;top:277.39px;font-size:17.90px;line-height:20px;font-weight:normal;color:#484848;">Neutro (%)</div>
<div class="b" style="left:352px;top:302.10px;width:87.5px;height:30.21px;background:#ebebeb"></div>
<div class="t" style="left:28.30px;top:307.60px;font-size:17.90px;line-height:20px;font-weight:normal;color:#484848;">Neutro (G/L)</div>
<div class="b" style="left:352px;top:332.31px;width:87.5px;height:30.21px;background:#ebebeb"></div>
<div class="t" style="left:28.30px;top:337.81px;font-size:17.90px;line-height:20px;font-weight:normal;color:#484848;">Eosino (%)</div>
<div class="b" style="left:352px;top:362.52px;width:87.5px;height:30.21px;background:#ebebeb"></div>
<div class="t" style="left:28.30px;top:368.02px;font-size:17.90px;line-height:20px;font-weight:normal;color:#484848;">Eosino (G/L)</div>
<div class="b" style="left:352px;top:392.73px;width:87.5px;height:30.21px;background:#ebebeb"></div>
<div class="t" style="left:28.30px;top:398.23px;font-size:17.90px;line-height:20px;font-weight:normal;color:#484848;">Baso (%)</div>
<div class="b" style="left:352px;top:422.94px;width:87.5px;height:30.21px;background:#ebebeb"></div>
<div class="t" style="left:28.30px;top:428.44px;font-size:17.90px;line-height:20px;font-weight:normal;color:#484848;">Baso (G/L)</div>
<div class="b" style="left:352px;top:453.15px;width:87.5px;height:30.21px;background:#ebebeb"></div>
<div class="t" style="left:28.30px;top:458.65px;font-size:17.90px;line-height:20px;font-weight:normal;color:#484848;">Lympho (%)</div>
<div class="b" style="left:352px;top:483.36px;width:87.5px;height:30.21px;background:#ebebeb"></div>
<div class="t" style="left:28.30px;top:488.86px;font-size:17.90px;line-height:20px;font-weight:normal;color:#484848;">Lympho (G/L)</div>
<div class="b" style="left:352px;top:513.57px;width:87.5px;height:30.21px;background:#ebebeb"></div>
<div class="t" style="left:28.30px;top:519.07px;font-size:17.90px;line-height:20px;font-weight:normal;color:#484848;">Mono (%)</div>
<div class="b" style="left:352px;top:543.78px;width:87.5px;height:30.21px;background:#ebebeb"></div>
<div class="t" style="left:28.30px;top:549.28px;font-size:17.90px;line-height:20px;font-weight:normal;color:#484848;">Mono (G/L)</div>
<div class="b" style="left:352px;top:573.99px;width:87.5px;height:30.21px;background:#ebebeb"></div>
<div class="t" style="left:28.30px;top:579.49px;font-size:17.90px;line-height:20px;font-weight:normal;color:#484848;">Plaquettes (10*3/mL)</div>
<div class="b" style="left:352px;top:604.20px;width:87.5px;height:30.21px;background:#ebebeb"></div>
<div class="t" style="left:28.30px;top:609.70px;font-size:17.90px;line-height:20px;font-weight:normal;color:#484848;">VPM (fL)</div>
<div class="b" style="left:0;top:634.41px;width:445px;height:30.21px;background:#e4e4e4"></div>
<div class="t" style="left:7.60px;top:639.06px;font-size:17.90px;line-height:20px;font-weight:bold;color:#333;">HEMATOLOGIE COAG</div>
<div class="t" style="left:352.28px;top:639.06px;font-size:17.90px;line-height:20px;font-weight:normal;color:#8a8a8a;">0/08/2018</div>
<div class="b" style="left:352px;top:664.62px;width:87.5px;height:30.21px;background:#ebebeb"></div>
<div class="t" style="left:28.30px;top:670.12px;font-size:17.90px;line-height:20px;font-weight:normal;color:#484848;">TP (%)</div>
<div class="b" style="left:352px;top:694.83px;width:87.5px;height:30.21px;background:#ebebeb"></div>
<div class="t" style="left:28.30px;top:700.33px;font-size:17.90px;line-height:20px;font-weight:normal;color:#484848;">TCA Ratio (%)</div>
<div class="b" style="left:352px;top:725.04px;width:87.5px;height:30.21px;background:#ebebeb"></div>
<div class="t" style="left:28.30px;top:730.54px;font-size:17.90px;line-height:20px;font-weight:normal;color:#484848;">Fibrinogène (g/l)</div>
<div class="b" style="left:0;top:755.25px;width:445px;height:30.21px;background:#e4e4e4"></div>
<div class="t" style="left:7.60px;top:759.90px;font-size:17.90px;line-height:20px;font-weight:bold;color:#333;">IONO</div>
<div class="t" style="left:352.28px;top:759.90px;font-size:17.90px;line-height:20px;font-weight:normal;color:#8a8a8a;">0/08/2018</div>
<div class="b" style="left:352px;top:785.46px;width:87.5px;height:30.21px;background:#ebebeb"></div>
<div class="t" style="left:28.30px;top:790.96px;font-size:17.90px;line-height:20px;font-weight:normal;color:#484848;">K (mmol/L)</div>
<div class="b" style="left:352px;top:815.67px;width:87.5px;height:30.21px;background:#ebebeb"></div>
<div class="t" style="left:28.30px;top:821.17px;font-size:17.90px;line-height:20px;font-weight:normal;color:#484848;">Na (mmol/L)</div>
<div class="b" style="left:352px;top:845.88px;width:87.5px;height:30.21px;background:#ebebeb"></div>
<div class="t" style="left:28.30px;top:851.38px;font-size:17.90px;line-height:20px;font-weight:normal;color:#484848;">Cl (mmol/L)</div>
<div class="b" style="left:352px;top:876.09px;width:87.5px;height:30.21px;background:#ebebeb"></div>
<div class="t" style="left:28.30px;top:881.59px;font-size:17.90px;line-height:20px;font-weight:normal;color:#484848;">Ca (mmol/L)</div>
<div class="b" style="left:352px;top:906.30px;width:87.5px;height:30.21px;background:#ebebeb"></div>
<div class="t" style="left:28.30px;top:911.80px;font-size:17.90px;line-height:20px;font-weight:normal;color:#484848;">Ca corrigé albumine (mmol/L)</div>
<div class="b" style="left:352px;top:936.51px;width:87.5px;height:30.21px;background:#ebebeb"></div>
<div class="t" style="left:28.30px;top:942.01px;font-size:17.90px;line-height:20px;font-weight:normal;color:#484848;">P (mmol/L)</div>
<div class="b" style="left:352px;top:966.72px;width:87.5px;height:30.21px;background:#ebebeb"></div>
<div class="t" style="left:28.30px;top:972.22px;font-size:17.90px;line-height:20px;font-weight:normal;color:#484848;">RA (mmol/L)</div>
<div class="b" style="left:0;top:996.93px;width:445px;height:30.21px;background:#e4e4e4"></div>
<div class="t" style="left:7.60px;top:1001.58px;font-size:17.90px;line-height:20px;font-weight:bold;color:#333;">FONCTION RENALE</div>
<div class="t" style="left:352.28px;top:1001.58px;font-size:17.90px;line-height:20px;font-weight:normal;color:#8a8a8a;">0/08/2018</div>
<div class="b" style="left:352px;top:1027.14px;width:87.5px;height:30.21px;background:#ebebeb"></div>
<div class="t" style="left:28.30px;top:1032.64px;font-size:17.90px;line-height:20px;font-weight:normal;color:#484848;">Urée (mmol/l)</div>
<div class="b" style="left:352px;top:1057.35px;width:87.5px;height:30.21px;background:#ebebeb"></div>
<div class="t" style="left:28.30px;top:1062.85px;font-size:17.90px;line-height:20px;font-weight:normal;color:#484848;">Urée g/l</div>
<div class="b" style="left:352px;top:1087.56px;width:87.5px;height:30.21px;background:#ebebeb"></div>
<div class="t" style="left:28.30px;top:1093.06px;font-size:17.90px;line-height:20px;font-weight:normal;color:#484848;">Créatinine umol/l</div>
<div class="b" style="left:352px;top:1117.77px;width:87.5px;height:30.21px;background:#ebebeb"></div>
<div class="t" style="left:28.30px;top:1123.27px;font-size:17.90px;line-height:20px;font-weight:normal;color:#484848;">DFG CPK-EPI (mL/mn/1,73m2)</div>
<div class="b" style="left:0;top:1147.98px;width:445px;height:30.21px;background:#e4e4e4"></div>
<div class="t" style="left:7.60px;top:1152.63px;font-size:17.90px;line-height:20px;font-weight:bold;color:#333;">URINES</div>
<div class="t" style="left:352.28px;top:1152.63px;font-size:17.90px;line-height:20px;font-weight:normal;color:#8a8a8a;">0/08/2018</div>
<div class="b" style="left:352px;top:1178.19px;width:87.5px;height:30.21px;background:#ebebeb"></div>
<div class="t" style="left:28.30px;top:1183.69px;font-size:17.90px;line-height:20px;font-weight:normal;color:#484848;">Diurèse (L/24h)</div>
<div class="b" style="left:352px;top:1208.40px;width:87.5px;height:30.21px;background:#ebebeb"></div>
<div class="t" style="left:28.30px;top:1213.90px;font-size:17.90px;line-height:20px;font-weight:normal;color:#484848;">Leucocytes</div>
<div class="b" style="left:0;top:30px;width:444px;height:1px;background:#cfcfcf"></div>
<div class="b" style="left:0;top:60px;width:444px;height:1px;background:#cfcfcf"></div>
<div class="b" style="left:0;top:90px;width:444px;height:1px;background:#cfcfcf"></div>
<div class="b" style="left:0;top:120px;width:444px;height:1px;background:#cfcfcf"></div>
<div class="b" style="left:0;top:151px;width:444px;height:1px;background:#cfcfcf"></div>
<div class="b" style="left:0;top:181px;width:444px;height:1px;background:#cfcfcf"></div>
<div class="b" style="left:0;top:211px;width:444px;height:1px;background:#cfcfcf"></div>
<div class="b" style="left:0;top:241px;width:444px;height:1px;background:#cfcfcf"></div>
<div class="b" style="left:0;top:271px;width:444px;height:1px;background:#cfcfcf"></div>
<div class="b" style="left:0;top:302px;width:444px;height:1px;background:#cfcfcf"></div>
<div class="b" style="left:0;top:332px;width:444px;height:1px;background:#cfcfcf"></div>
<div class="b" style="left:0;top:362px;width:444px;height:1px;background:#cfcfcf"></div>
<div class="b" style="left:0;top:392px;width:444px;height:1px;background:#cfcfcf"></div>
<div class="b" style="left:0;top:422px;width:444px;height:1px;background:#cfcfcf"></div>
<div class="b" style="left:0;top:453px;width:444px;height:1px;background:#cfcfcf"></div>
<div class="b" style="left:0;top:483px;width:444px;height:1px;background:#cfcfcf"></div>
<div class="b" style="left:0;top:513px;width:444px;height:1px;background:#cfcfcf"></div>
<div class="b" style="left:0;top:543px;width:444px;height:1px;background:#cfcfcf"></div>
<div class="b" style="left:0;top:573px;width:444px;height:1px;background:#cfcfcf"></div>
<div class="b" style="left:0;top:604px;width:444px;height:1px;background:#cfcfcf"></div>
<div class="b" style="left:0;top:634px;width:444px;height:1px;background:#cfcfcf"></div>
<div class="b" style="left:0;top:664px;width:444px;height:1px;background:#cfcfcf"></div>
<div class="b" style="left:0;top:694px;width:444px;height:1px;background:#cfcfcf"></div>
<div class="b" style="left:0;top:725px;width:444px;height:1px;background:#cfcfcf"></div>
<div class="b" style="left:0;top:755px;width:444px;height:1px;background:#cfcfcf"></div>
<div class="b" style="left:0;top:785px;width:444px;height:1px;background:#cfcfcf"></div>
<div class="b" style="left:0;top:815px;width:444px;height:1px;background:#cfcfcf"></div>
<div class="b" style="left:0;top:845px;width:444px;height:1px;background:#cfcfcf"></div>
<div class="b" style="left:0;top:876px;width:444px;height:1px;background:#cfcfcf"></div>
<div class="b" style="left:0;top:906px;width:444px;height:1px;background:#cfcfcf"></div>
<div class="b" style="left:0;top:936px;width:444px;height:1px;background:#cfcfcf"></div>
<div class="b" style="left:0;top:966px;width:444px;height:1px;background:#cfcfcf"></div>
<div class="b" style="left:0;top:996px;width:444px;height:1px;background:#cfcfcf"></div>
<div class="b" style="left:0;top:1027px;width:444px;height:1px;background:#cfcfcf"></div>
<div class="b" style="left:0;top:1057px;width:444px;height:1px;background:#cfcfcf"></div>
<div class="b" style="left:0;top:1087px;width:444px;height:1px;background:#cfcfcf"></div>
<div class="b" style="left:0;top:1117px;width:444px;height:1px;background:#cfcfcf"></div>
<div class="b" style="left:0;top:1147px;width:444px;height:1px;background:#cfcfcf"></div>
<div class="b" style="left:0;top:1178px;width:444px;height:1px;background:#cfcfcf"></div>
<div class="b" style="left:0;top:1208px;width:444px;height:1px;background:#cfcfcf"></div>
<div class="b" style="left:0;top:1238px;width:444px;height:1px;background:#cfcfcf"></div>
<div class="b" style="left:351.5px;top:0;width:1.2px;height:1223px;background:#d0d0d0"></div>
<div class="b" style="left:439px;top:0;width:1.2px;height:1223px;background:#d0d0d0"></div>
<div class="b" style="left:0;top:0;width:1.3px;height:1223px;background:#b8b8b8"></div>
</div>
<div class="b" style="left:462px;top:177px;width:22.5px;height:1223px;background:#f1f1f1"></div>
<div class="b" style="left:462px;top:200.5px;width:20.5px;height:564.5px;background:#c1c1c1"></div>
<svg class="b" style="left:462px;top:177px" width="22" height="24" viewBox="0 0 22 24"><path d="M5.5 16 L10.5 10.5 L15.5 16Z" fill="#a3a3a3"/></svg>
<svg class="b" style="left:462px;top:1376px" width="22" height="24" viewBox="0 0 22 24"><path d="M5.5 9 L10.5 14.5 L15.5 9Z" fill="#505050"/></svg>
<div class="b" style="left:17px;top:1400px;width:445px;height:23.5px;background:#f1f1f1"></div>
<div class="b" style="left:462px;top:1400px;width:22.5px;height:23.5px;background:#dcdcdc"></div>
<div class="b" style="left:40px;top:1402px;width:271px;height:19.5px;background:#c1c1c1"></div>
<svg class="b" style="left:17px;top:1400px" width="24" height="24" viewBox="0 0 24 24"><path d="M14.5 6.5 L9 11.75 L14.5 17Z" fill="#a3a3a3"/></svg>
<svg class="b" style="left:438px;top:1400px" width="24" height="24" viewBox="0 0 24 24"><path d="M8.5 6.5 L14 11.75 L8.5 17Z" fill="#505050"/></svg>
<div class="t" style="left:510.85px;top:131.10px;font-size:30.59px;line-height:34px;font-weight:bold;color:#2e7fd6;transform:scaleX(0.9286);">Documentation</div>
<div class="b" style="left:512px;top:180.5px;width:1339px;height:2px;background:#e2e2e2"></div>
<svg class="b" style="left:508px;top:206px" width="38" height="38" viewBox="508 206 38 38">
<circle cx="526.4" cy="224.7" r="13.8" fill="none" stroke="#111" stroke-width="1.8"/>
<circle cx="526.4" cy="218.3" r="2.9" fill="none" stroke="#111" stroke-width="1.7"/>
<path d="M519.6 232.8 C520.2 228 522.8 225.6 526.4 225.6 C530 225.6 532.6 228 533.2 232.8" fill="none" stroke="#111" stroke-width="1.7" stroke-linecap="round"/>
</svg>
<div class="t" style="left:559.54px;top:212.60px;font-size:20.00px;line-height:22px;font-weight:normal;color:#4a4a4a;transform:scaleX(0.9140);-webkit-text-stroke:0.3px #4a4a4a;">DR John D. Zoidberg</div>
<div class="t" style="left:1097.30px;top:212.60px;font-size:20.00px;line-height:22px;font-weight:normal;color:#4a4a4a;transform:scaleX(0.9433);-webkit-text-stroke:0.3px #4a4a4a;">Image médicale - IRM</div>
<div class="t" style="left:1683.45px;top:212.60px;font-size:20.00px;line-height:22px;font-weight:normal;color:#4a4a4a;transform:scaleX(0.9660);-webkit-text-stroke:0.3px #4a4a4a;">Mardi 16 Août 2022</div>
<div class="b" style="left:513px;top:264px;width:1337.5px;height:852.5px;background:#f4f4f4;border:1px solid #e4e4e4"></div>
<svg class="b" style="left:955px;top:280px" width="60" height="56" viewBox="955 280 60 56">
<rect x="965" y="302.8" width="28.2" height="27.8" rx="2.5" fill="none" stroke="#111" stroke-width="2.1"/>
<path d="M1003 301.5 V297 Q1003 292.3 998.3 292.3 H977" fill="none" stroke="#111" stroke-width="2"/>
<path d="M982.5 287.3 L976.7 293 L982.5 298.7" fill="none" stroke="#111" stroke-width="2"/>
</svg>
<div class="t" style="left:1005.21px;top:304.50px;font-size:21.32px;line-height:24px;font-weight:bold;color:#111;transform:scaleX(0.9280);">Pivoter</div>
<svg class="b" style="left:1125px;top:290px" width="100" height="44" viewBox="1125 290 100 44">
<circle cx="1143.3" cy="308.2" r="9.2" fill="none" stroke="#111" stroke-width="2.1"/>
<path d="M1138.6 308.2 H1148" stroke="#111" stroke-width="2.1"/>
<path d="M1150 315 L1161 325.8" stroke="#111" stroke-width="2.2" stroke-linecap="round"/>
<circle cx="1194.5" cy="308.4" r="9.2" fill="none" stroke="#111" stroke-width="2.1"/>
<path d="M1189.8 308.4 H1199.2 M1194.5 303.7 V313.1" stroke="#111" stroke-width="2.1"/>
<path d="M1201.2 315.2 L1212.5 326" stroke="#111" stroke-width="2.2" stroke-linecap="round"/>
</svg>
<div class="t" style="left:1237.72px;top:304.30px;font-size:21.32px;line-height:24px;font-weight:bold;color:#111;transform:scaleX(0.9214);">Réduire/agrandir</div>
<svg class="b" style="left:639px;top:382px" width="1087" height="624" viewBox="0 0 1087 624"><use href="#mri"/></svg>
<div class="b" style="left:1714.5px;top:1156px;width:133px;height:44.5px;border:2px solid #b31b24;border-radius:3px;background:#fff"></div>
<svg class="b" style="left:1728px;top:1166px" width="30" height="30" viewBox="1728 1166 30 30">
<path d="M1736.4 1174.4 L1749.2 1186.4 M1749.2 1174.4 L1736.4 1186.4" stroke="#e0000e" stroke-width="4.8" stroke-linecap="round"/>
</svg>
<div class="t" style="left:1763.72px;top:1168.20px;font-size:22.06px;line-height:25px;font-weight:bold;color:#111;transform:scaleX(0.8957);">Fermer</div>
<div class="t" style="left:1978.63px;top:133.00px;font-size:30.15px;line-height:33px;font-weight:bold;color:#2e7fd6;transform:scaleX(0.9526);">Partage et impression</div>
<div class="b" style="left:1980px;top:181.5px;width:550px;height:2px;background:#e2e2e2"></div>
<svg class="b" style="left:1968px;top:236px" width="64" height="230" viewBox="1968 236 64 230">
<rect x="1986.9" y="245.5" width="25.6" height="19" rx="2.5" fill="none" stroke="#111" stroke-width="2.5"/>
<rect x="1976.3" y="265" width="46.2" height="20.3" rx="4" fill="#fff" stroke="#111" stroke-width="2.5"/>
<rect x="1986.9" y="278.5" width="25.6" height="13" fill="#fff" stroke="#111" stroke-width="2.5"/>
<rect x="1977.3" y="328.2" width="44.4" height="36" rx="3" fill="none" stroke="#111" stroke-width="2.5"/>
<path d="M1977.5 335.5 H2021.5" stroke="#111" stroke-width="2"/>
<circle cx="2016.5" cy="331.8" r="1.3" fill="#111"/>
<path d="M1990.5 351.5 H2008 M2002 345.3 L2008.2 351.5 L2002 357.7" fill="none" stroke="#111" stroke-width="2.6" stroke-linecap="round" stroke-linejoin="round"/>
<rect x="1977.3" y="413.5" width="44.4" height="31.8" rx="2.5" fill="none" stroke="#111" stroke-width="2.5"/>
<path d="M1978.5 414.8 L1999.5 432.3 L2020.5 414.8" fill="none" stroke="#111" stroke-width="2.5"/>
</svg>
<div class="b" style="left:2097px;top:243.75px;width:197.75px;height:44.00px;border:2px solid #111;border-radius:3px"></div>
<div class="t" style="left:2152.45px;top:256.50px;font-size:21.03px;line-height:23px;font-weight:bold;color:#111;transform:scaleX(0.9482);">Imprimer</div>
<div class="b" style="left:2097px;top:322.5px;width:197.75px;height:43.50px;border:2px solid #111;border-radius:3px"></div>
<div class="t" style="left:2121.65px;top:336.50px;font-size:21.03px;line-height:23px;font-weight:bold;color:#111;transform:scaleX(0.9265);">Vers Télémédica</div>
<div class="b" style="left:2097px;top:405px;width:197.75px;height:43.50px;border:2px solid #111;border-radius:3px"></div>
<div class="t" style="left:2154.20px;top:417.00px;font-size:21.03px;line-height:23px;font-weight:bold;color:#111;transform:scaleX(0.9533);">Par email</div>
<div class="t" style="left:1979.10px;top:503.30px;font-size:31.32px;line-height:35px;font-weight:bold;color:#2e7fd6;transform:scaleX(0.9319);">Images</div>
<div class="b" style="left:1980px;top:552px;width:550px;height:2px;background:#e2e2e2"></div>
<div class="b" style="left:1980.8px;top:568px;width:13px;height:854px;border:1px solid #c8c8c8;background:#fff"></div>
<div class="b" style="left:1984.5px;top:571px;width:8.5px;height:844px;background:#e2e2e2"></div>
<div class="b" style="left:1984.8px;top:573px;width:7.2px;height:39.7px;background:#9b9b9b"></div>
<svg class="b" style="left:2007px;top:571.3px" width="358" height="206.1" viewBox="0 0 1087 624" preserveAspectRatio="none"><use href="#mrit"/></svg>
<svg class="b" style="left:2388px;top:566px" width="34" height="40" viewBox="2388 566 34 40">
<rect x="2393.8" y="573.9" width="21.9" height="3.6" rx="1.8" fill="none" stroke="#444" stroke-width="1.6"/>
<path d="M2401.3 573.6 Q2401.6 571.2 2404.75 571.2 Q2407.9 571.2 2408.2 573.6Z" fill="#444" stroke="#444" stroke-width="1"/>
<path d="M2395.3 577.6 L2396.7 600.6 H2412.8 L2414.2 577.6" fill="none" stroke="#444" stroke-width="1.6" stroke-linejoin="round"/>
</svg>
<div class="t" style="left:2432.42px;top:577.25px;font-size:21.32px;line-height:24px;font-weight:bold;color:#444;transform:scaleX(0.9086);">Supprimer</div>
</body></html>
